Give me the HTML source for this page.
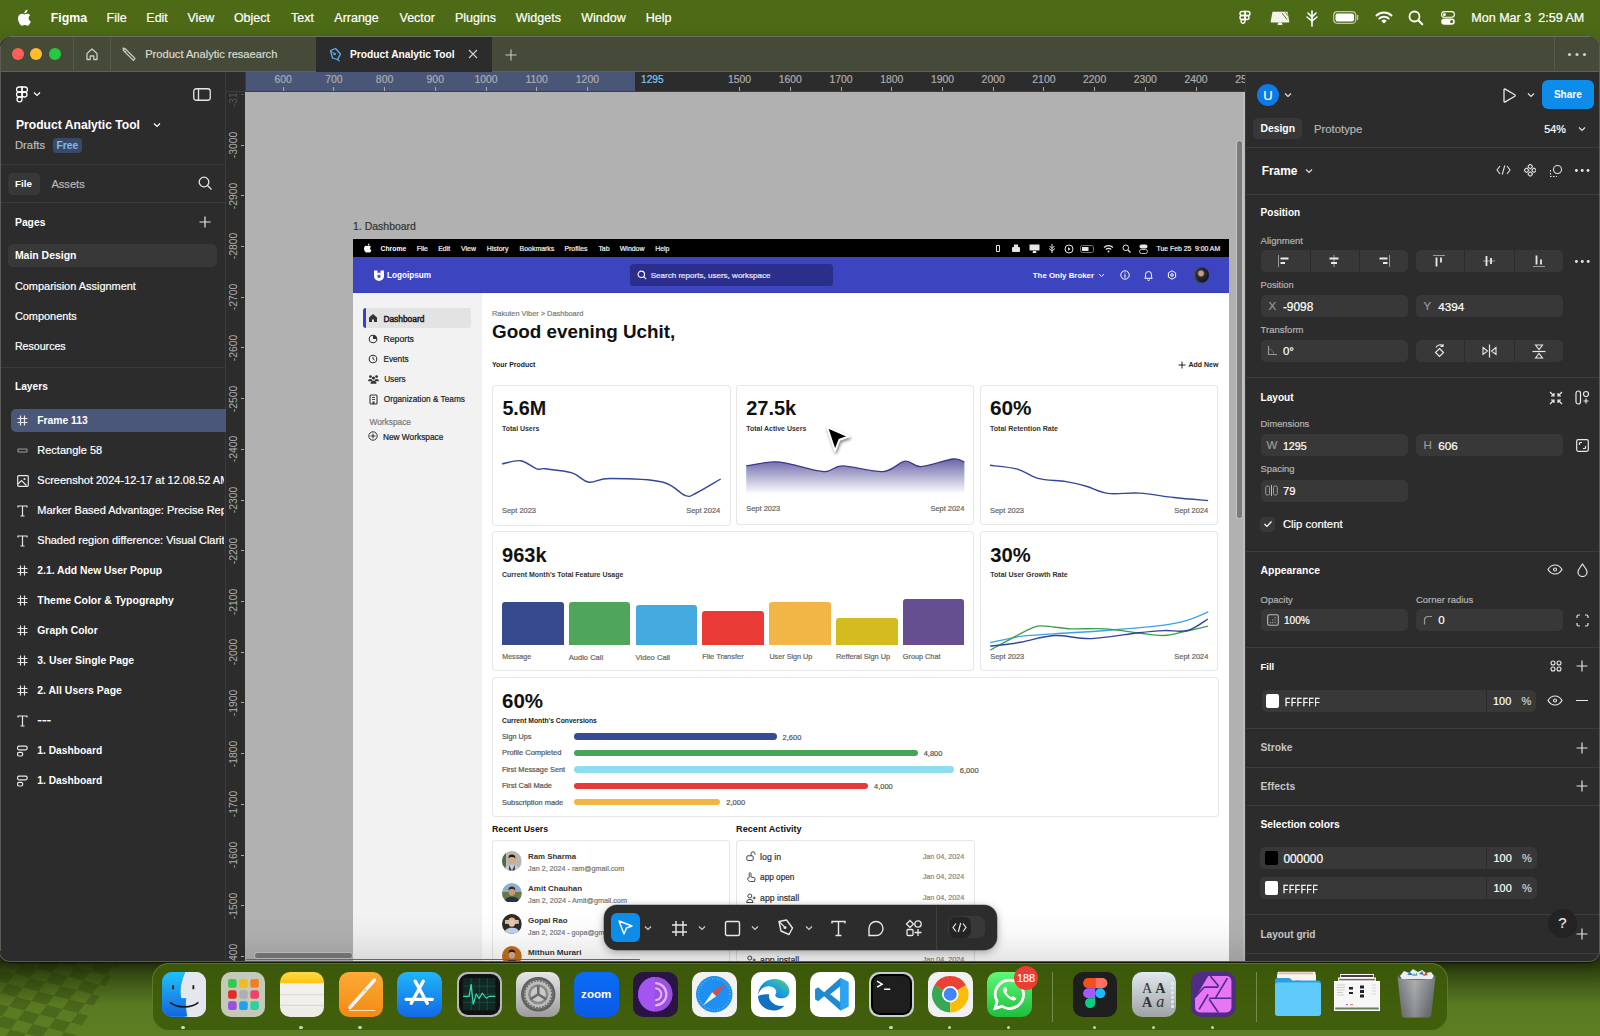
<!DOCTYPE html>
<html><head><meta charset="utf-8"><title>Figma</title>
<style>
html,body{margin:0;padding:0;}
body{width:1600px;height:1036px;overflow:hidden;position:relative;background:#4d6a17;font-family:"Liberation Sans",sans-serif;-webkit-font-smoothing:antialiased;}
</style></head><body>
<div style="position:absolute;left:0px;top:0px;width:1600px;height:37px;background:#4d6a17;"></div>
<svg style="position:absolute;left:18px;top:9px;" width="14" height="17" viewBox="0 0 14 17" fill="none"><path d="M10.6 9.1c0-1.9 1.6-2.8 1.6-2.9-0.9-1.3-2.3-1.5-2.8-1.5-1.2-0.1-2.3 0.7-2.9 0.7-0.6 0-1.5-0.7-2.5-0.7C2.7 4.7 1.4 5.5 0.7 6.8c-1.4 2.4-0.4 6 1 7.9 0.7 1 1.4 2 2.5 2 1 0 1.4-0.6 2.6-0.6 1.2 0 1.5 0.6 2.5 0.6 1.1 0 1.8-1 2.4-2 0.8-1.1 1.1-2.2 1.1-2.2s-2.2-0.8-2.2-3.4zM8.6 3.2c0.5-0.7 0.9-1.6 0.8-2.5-0.8 0-1.7 0.5-2.3 1.2-0.5 0.6-0.9 1.5-0.8 2.4 0.9 0.1 1.7-0.4 2.3-1.1z" fill="#fff"/></svg>
<div style="position:absolute;white-space:pre;color:#fff;font-weight:700;left:50.7px;top:10.88px;font-size:12.36px;line-height:14.83px;">Figma</div>
<div style="position:absolute;white-space:pre;color:#fff;font-weight:400;-webkit-text-stroke:0.2px currentColor;left:106.6px;top:10.80px;font-size:12.50px;line-height:15.0px;">File</div>
<div style="position:absolute;white-space:pre;color:#fff;font-weight:400;-webkit-text-stroke:0.2px currentColor;left:146.3px;top:10.80px;font-size:12.50px;line-height:15.0px;">Edit</div>
<div style="position:absolute;white-space:pre;color:#fff;font-weight:400;-webkit-text-stroke:0.2px currentColor;left:187.5px;top:10.80px;font-size:12.50px;line-height:15.0px;">View</div>
<div style="position:absolute;white-space:pre;color:#fff;font-weight:400;-webkit-text-stroke:0.2px currentColor;left:233.9px;top:10.80px;font-size:12.50px;line-height:15.0px;">Object</div>
<div style="position:absolute;white-space:pre;color:#fff;font-weight:400;-webkit-text-stroke:0.2px currentColor;left:291px;top:10.80px;font-size:12.50px;line-height:15.0px;">Text</div>
<div style="position:absolute;white-space:pre;color:#fff;font-weight:400;-webkit-text-stroke:0.2px currentColor;left:334.3px;top:10.80px;font-size:12.50px;line-height:15.0px;">Arrange</div>
<div style="position:absolute;white-space:pre;color:#fff;font-weight:400;-webkit-text-stroke:0.2px currentColor;left:399.5px;top:10.80px;font-size:12.50px;line-height:15.0px;">Vector</div>
<div style="position:absolute;white-space:pre;color:#fff;font-weight:400;-webkit-text-stroke:0.2px currentColor;left:455px;top:10.80px;font-size:12.50px;line-height:15.0px;">Plugins</div>
<div style="position:absolute;white-space:pre;color:#fff;font-weight:400;-webkit-text-stroke:0.2px currentColor;left:515.75px;top:10.80px;font-size:12.50px;line-height:15.0px;">Widgets</div>
<div style="position:absolute;white-space:pre;color:#fff;font-weight:400;-webkit-text-stroke:0.2px currentColor;left:581.25px;top:10.80px;font-size:12.50px;line-height:15.0px;">Window</div>
<div style="position:absolute;white-space:pre;color:#fff;font-weight:400;-webkit-text-stroke:0.2px currentColor;left:645.75px;top:10.80px;font-size:12.50px;line-height:15.0px;">Help</div>
<svg style="position:absolute;left:1238px;top:10px;" width="14" height="15" viewBox="0 0 14 15" fill="none"><g stroke="#fff" stroke-width="1.4" fill="none"><path d="M4 1.5h3v4H4a2 2 0 010-4z"/><path d="M7 1.5h3a2 2 0 010 4H7z"/><path d="M4 5.5h3v4H4a2 2 0 010-4z"/><circle cx="9" cy="7.5" r="2"/><path d="M4 9.5h3v2a2 2 0 11-3-2z"/></g></svg>
<svg style="position:absolute;left:1269.5px;top:10.5px;" width="20" height="15" viewBox="0 0 20 15" fill="none"><path d="M2.5 0.8h15l1.8 9.7a0.8 0.8 0 01-0.8 0.9H1.5a0.8 0.8 0 01-0.8-0.9z" fill="#f2f2ea"/><path d="M8.3 11.4h3.4l0.8 2.6H7.5z" fill="#f2f2ea"/><path d="M12 2l5 6.5M15.5 1.5l2 3" stroke="#4d6a17" stroke-width="0.9"/></svg>
<svg style="position:absolute;left:1305px;top:8px;" width="14" height="20" viewBox="0 0 14 20" fill="none"><g stroke="#fff" stroke-width="1.6" fill="none" stroke-linecap="round"><path d="M7 3v15"/><path d="M3 5l4 4 4-4"/><path d="M2 9l5 4 5-4"/></g></svg>
<svg style="position:absolute;left:1333px;top:11px;" width="26" height="13" viewBox="0 0 26 13" fill="none"><rect x="0.7" y="0.7" width="22" height="11.6" rx="3.5" stroke="#bfc7a8" stroke-width="1.2"/><rect x="2.5" y="2.5" width="18.5" height="8" rx="2" fill="#fff"/><path d="M24.5 4.5v4" stroke="#bfc7a8" stroke-width="1.5" stroke-linecap="round"/></svg>
<svg style="position:absolute;left:1375px;top:10px;" width="18" height="15" viewBox="0 0 18 15" fill="none"><g fill="none" stroke="#fff" stroke-width="2" stroke-linecap="round"><path d="M1.5 5.5a11 11 0 0115 0"/><path d="M4.3 8.5a7 7 0 019.4 0"/></g><path d="M9 13.5l-2.6-2.6a3.6 3.6 0 015.2 0z" fill="#fff"/></svg>
<svg style="position:absolute;left:1408px;top:10px;" width="16" height="16" viewBox="0 0 16 16" fill="none"><circle cx="6.5" cy="6.5" r="5" stroke="#fff" stroke-width="1.8"/><path d="M10.3 10.3l4 4" stroke="#fff" stroke-width="2" stroke-linecap="round"/></svg>
<svg style="position:absolute;left:1441px;top:11.2px;" width="14" height="14" viewBox="0 0 14 14" fill="none"><rect x="0.6" y="0.6" width="12.8" height="5.6" rx="2.8" stroke="#fff" stroke-width="1.1"/><circle cx="3.4" cy="3.4" r="1.5" fill="#fff"/><rect x="0.2" y="7.4" width="13.6" height="6.4" rx="3.2" fill="#fff"/><circle cx="10.6" cy="10.6" r="1.6" fill="#4d6a17"/></svg>
<div style="position:absolute;white-space:pre;color:#fff;font-weight:400;-webkit-text-stroke:0.2px currentColor;left:1471.25px;top:10.77px;font-size:12.55px;line-height:15.06px;">Mon Mar 3  2:59 AM</div>
<div style="position:absolute;left:0px;top:930px;width:1600px;height:106px;background:linear-gradient(180deg,#26350b 0px,#26350b 30px,#3a5214 48px,#5a7a22 75px,#5e7e24 106px);"></div>
<svg style="position:absolute;left:0px;top:961px;" width="130" height="75" viewBox="0 0 130 75" fill="none"><defs><clipPath id="cck"><path d="M0,0 L120,0 L76,75 L0,75z"/></clipPath></defs><g clip-path="url(#cck)" fill="#1c2a06" opacity="0.24"><path d="M-26.5,-31.5 l15.5,4.0 l-7.0,9.5 l-15.5,-4.0z"/><path d="M-40.5,-12.5 l15.5,4.0 l-7.0,9.5 l-15.5,-4.0z"/><path d="M-54.5,6.5 l15.5,4.0 l-7.0,9.5 l-15.5,-4.0z"/><path d="M-68.5,25.5 l15.5,4.0 l-7.0,9.5 l-15.5,-4.0z"/><path d="M-82.5,44.5 l15.5,4.0 l-7.0,9.5 l-15.5,-4.0z"/><path d="M-96.5,63.5 l15.5,4.0 l-7.0,9.5 l-15.5,-4.0z"/><path d="M-4.0,-37.0 l15.5,4.0 l-7.0,9.5 l-15.5,-4.0z"/><path d="M-18.0,-18.0 l15.5,4.0 l-7.0,9.5 l-15.5,-4.0z"/><path d="M-32.0,1.0 l15.5,4.0 l-7.0,9.5 l-15.5,-4.0z"/><path d="M-46.0,20.0 l15.5,4.0 l-7.0,9.5 l-15.5,-4.0z"/><path d="M-60.0,39.0 l15.5,4.0 l-7.0,9.5 l-15.5,-4.0z"/><path d="M-74.0,58.0 l15.5,4.0 l-7.0,9.5 l-15.5,-4.0z"/><path d="M-88.0,77.0 l15.5,4.0 l-7.0,9.5 l-15.5,-4.0z"/><path d="M4.5,-23.5 l15.5,4.0 l-7.0,9.5 l-15.5,-4.0z"/><path d="M-9.5,-4.5 l15.5,4.0 l-7.0,9.5 l-15.5,-4.0z"/><path d="M-23.5,14.5 l15.5,4.0 l-7.0,9.5 l-15.5,-4.0z"/><path d="M-37.5,33.5 l15.5,4.0 l-7.0,9.5 l-15.5,-4.0z"/><path d="M-51.5,52.5 l15.5,4.0 l-7.0,9.5 l-15.5,-4.0z"/><path d="M-65.5,71.5 l15.5,4.0 l-7.0,9.5 l-15.5,-4.0z"/><path d="M27.0,-29.0 l15.5,4.0 l-7.0,9.5 l-15.5,-4.0z"/><path d="M13.0,-10.0 l15.5,4.0 l-7.0,9.5 l-15.5,-4.0z"/><path d="M-1.0,9.0 l15.5,4.0 l-7.0,9.5 l-15.5,-4.0z"/><path d="M-15.0,28.0 l15.5,4.0 l-7.0,9.5 l-15.5,-4.0z"/><path d="M-29.0,47.0 l15.5,4.0 l-7.0,9.5 l-15.5,-4.0z"/><path d="M-43.0,66.0 l15.5,4.0 l-7.0,9.5 l-15.5,-4.0z"/><path d="M-57.0,85.0 l15.5,4.0 l-7.0,9.5 l-15.5,-4.0z"/><path d="M35.5,-15.5 l15.5,4.0 l-7.0,9.5 l-15.5,-4.0z"/><path d="M21.5,3.5 l15.5,4.0 l-7.0,9.5 l-15.5,-4.0z"/><path d="M7.5,22.5 l15.5,4.0 l-7.0,9.5 l-15.5,-4.0z"/><path d="M-6.5,41.5 l15.5,4.0 l-7.0,9.5 l-15.5,-4.0z"/><path d="M-20.5,60.5 l15.5,4.0 l-7.0,9.5 l-15.5,-4.0z"/><path d="M-34.5,79.5 l15.5,4.0 l-7.0,9.5 l-15.5,-4.0z"/><path d="M58.0,-21.0 l15.5,4.0 l-7.0,9.5 l-15.5,-4.0z"/><path d="M44.0,-2.0 l15.5,4.0 l-7.0,9.5 l-15.5,-4.0z"/><path d="M30.0,17.0 l15.5,4.0 l-7.0,9.5 l-15.5,-4.0z"/><path d="M16.0,36.0 l15.5,4.0 l-7.0,9.5 l-15.5,-4.0z"/><path d="M2.0,55.0 l15.5,4.0 l-7.0,9.5 l-15.5,-4.0z"/><path d="M-12.0,74.0 l15.5,4.0 l-7.0,9.5 l-15.5,-4.0z"/><path d="M-26.0,93.0 l15.5,4.0 l-7.0,9.5 l-15.5,-4.0z"/><path d="M66.5,-7.5 l15.5,4.0 l-7.0,9.5 l-15.5,-4.0z"/><path d="M52.5,11.5 l15.5,4.0 l-7.0,9.5 l-15.5,-4.0z"/><path d="M38.5,30.5 l15.5,4.0 l-7.0,9.5 l-15.5,-4.0z"/><path d="M24.5,49.5 l15.5,4.0 l-7.0,9.5 l-15.5,-4.0z"/><path d="M10.5,68.5 l15.5,4.0 l-7.0,9.5 l-15.5,-4.0z"/><path d="M-3.5,87.5 l15.5,4.0 l-7.0,9.5 l-15.5,-4.0z"/><path d="M89.0,-13.0 l15.5,4.0 l-7.0,9.5 l-15.5,-4.0z"/><path d="M75.0,6.0 l15.5,4.0 l-7.0,9.5 l-15.5,-4.0z"/><path d="M61.0,25.0 l15.5,4.0 l-7.0,9.5 l-15.5,-4.0z"/><path d="M47.0,44.0 l15.5,4.0 l-7.0,9.5 l-15.5,-4.0z"/><path d="M33.0,63.0 l15.5,4.0 l-7.0,9.5 l-15.5,-4.0z"/><path d="M19.0,82.0 l15.5,4.0 l-7.0,9.5 l-15.5,-4.0z"/><path d="M5.0,101.0 l15.5,4.0 l-7.0,9.5 l-15.5,-4.0z"/><path d="M97.5,0.5 l15.5,4.0 l-7.0,9.5 l-15.5,-4.0z"/><path d="M83.5,19.5 l15.5,4.0 l-7.0,9.5 l-15.5,-4.0z"/><path d="M69.5,38.5 l15.5,4.0 l-7.0,9.5 l-15.5,-4.0z"/><path d="M55.5,57.5 l15.5,4.0 l-7.0,9.5 l-15.5,-4.0z"/><path d="M41.5,76.5 l15.5,4.0 l-7.0,9.5 l-15.5,-4.0z"/><path d="M27.5,95.5 l15.5,4.0 l-7.0,9.5 l-15.5,-4.0z"/><path d="M120.0,-5.0 l15.5,4.0 l-7.0,9.5 l-15.5,-4.0z"/><path d="M106.0,14.0 l15.5,4.0 l-7.0,9.5 l-15.5,-4.0z"/><path d="M92.0,33.0 l15.5,4.0 l-7.0,9.5 l-15.5,-4.0z"/><path d="M78.0,52.0 l15.5,4.0 l-7.0,9.5 l-15.5,-4.0z"/><path d="M64.0,71.0 l15.5,4.0 l-7.0,9.5 l-15.5,-4.0z"/><path d="M50.0,90.0 l15.5,4.0 l-7.0,9.5 l-15.5,-4.0z"/><path d="M36.0,109.0 l15.5,4.0 l-7.0,9.5 l-15.5,-4.0z"/><path d="M128.5,8.5 l15.5,4.0 l-7.0,9.5 l-15.5,-4.0z"/><path d="M114.5,27.5 l15.5,4.0 l-7.0,9.5 l-15.5,-4.0z"/><path d="M100.5,46.5 l15.5,4.0 l-7.0,9.5 l-15.5,-4.0z"/><path d="M86.5,65.5 l15.5,4.0 l-7.0,9.5 l-15.5,-4.0z"/><path d="M72.5,84.5 l15.5,4.0 l-7.0,9.5 l-15.5,-4.0z"/><path d="M58.5,103.5 l15.5,4.0 l-7.0,9.5 l-15.5,-4.0z"/><path d="M151.0,3.0 l15.5,4.0 l-7.0,9.5 l-15.5,-4.0z"/><path d="M137.0,22.0 l15.5,4.0 l-7.0,9.5 l-15.5,-4.0z"/><path d="M123.0,41.0 l15.5,4.0 l-7.0,9.5 l-15.5,-4.0z"/><path d="M109.0,60.0 l15.5,4.0 l-7.0,9.5 l-15.5,-4.0z"/><path d="M95.0,79.0 l15.5,4.0 l-7.0,9.5 l-15.5,-4.0z"/><path d="M81.0,98.0 l15.5,4.0 l-7.0,9.5 l-15.5,-4.0z"/><path d="M67.0,117.0 l15.5,4.0 l-7.0,9.5 l-15.5,-4.0z"/><path d="M159.5,16.5 l15.5,4.0 l-7.0,9.5 l-15.5,-4.0z"/><path d="M145.5,35.5 l15.5,4.0 l-7.0,9.5 l-15.5,-4.0z"/><path d="M131.5,54.5 l15.5,4.0 l-7.0,9.5 l-15.5,-4.0z"/><path d="M117.5,73.5 l15.5,4.0 l-7.0,9.5 l-15.5,-4.0z"/><path d="M103.5,92.5 l15.5,4.0 l-7.0,9.5 l-15.5,-4.0z"/><path d="M89.5,111.5 l15.5,4.0 l-7.0,9.5 l-15.5,-4.0z"/><path d="M182.0,11.0 l15.5,4.0 l-7.0,9.5 l-15.5,-4.0z"/><path d="M168.0,30.0 l15.5,4.0 l-7.0,9.5 l-15.5,-4.0z"/><path d="M154.0,49.0 l15.5,4.0 l-7.0,9.5 l-15.5,-4.0z"/><path d="M140.0,68.0 l15.5,4.0 l-7.0,9.5 l-15.5,-4.0z"/><path d="M126.0,87.0 l15.5,4.0 l-7.0,9.5 l-15.5,-4.0z"/><path d="M112.0,106.0 l15.5,4.0 l-7.0,9.5 l-15.5,-4.0z"/><path d="M98.0,125.0 l15.5,4.0 l-7.0,9.5 l-15.5,-4.0z"/><path d="M190.5,24.5 l15.5,4.0 l-7.0,9.5 l-15.5,-4.0z"/><path d="M176.5,43.5 l15.5,4.0 l-7.0,9.5 l-15.5,-4.0z"/><path d="M162.5,62.5 l15.5,4.0 l-7.0,9.5 l-15.5,-4.0z"/><path d="M148.5,81.5 l15.5,4.0 l-7.0,9.5 l-15.5,-4.0z"/><path d="M134.5,100.5 l15.5,4.0 l-7.0,9.5 l-15.5,-4.0z"/><path d="M120.5,119.5 l15.5,4.0 l-7.0,9.5 l-15.5,-4.0z"/><path d="M213.0,19.0 l15.5,4.0 l-7.0,9.5 l-15.5,-4.0z"/><path d="M199.0,38.0 l15.5,4.0 l-7.0,9.5 l-15.5,-4.0z"/><path d="M185.0,57.0 l15.5,4.0 l-7.0,9.5 l-15.5,-4.0z"/><path d="M171.0,76.0 l15.5,4.0 l-7.0,9.5 l-15.5,-4.0z"/><path d="M157.0,95.0 l15.5,4.0 l-7.0,9.5 l-15.5,-4.0z"/><path d="M143.0,114.0 l15.5,4.0 l-7.0,9.5 l-15.5,-4.0z"/><path d="M129.0,133.0 l15.5,4.0 l-7.0,9.5 l-15.5,-4.0z"/></g></svg>
<div style="position:absolute;left:0px;top:36.5px;width:1599.3px;height:924px;background:#2c2c2c;border-radius:10px;box-shadow:0 0 0 1px #5b5c58, 0 1.5px 1px rgba(0,0,0,0.55), 0 4px 14px rgba(0,0,0,0.35);overflow:hidden"></div>
<div style="position:absolute;left:0.5px;top:37px;width:1598.5px;height:35px;background:#464b39;border-radius:10px 10px 0 0"></div>
<div style="position:absolute;left:0.5px;top:71px;width:1598.5px;height:1px;background:#5f6452;"></div>
<div style="position:absolute;left:10px;top:36px;width:1580px;height:1px;background:#6c715f;"></div>
<div style="position:absolute;left:11.8px;top:48.4px;width:12px;height:12px;background:#fe5f57;border-radius:50%"></div>
<div style="position:absolute;left:30.4px;top:48.4px;width:12px;height:12px;background:#febc2e;border-radius:50%"></div>
<div style="position:absolute;left:49.2px;top:48.4px;width:12px;height:12px;background:#28c840;border-radius:50%"></div>
<div style="position:absolute;left:73px;top:37px;width:1px;height:35px;background:#565a49;"></div>
<div style="position:absolute;left:110px;top:37px;width:1px;height:35px;background:#565a49;"></div>
<div style="position:absolute;left:1554px;top:37px;width:1px;height:35px;background:#565a49;"></div>
<svg style="position:absolute;left:85px;top:47px;" width="14" height="14" viewBox="0 0 14 14" fill="none"><path d="M2 6.5L7 2l5 4.5V12.5H8.8V9H5.2v3.5H2z" stroke="#c8cbbd" stroke-width="1.3" stroke-linejoin="round"/></svg>
<svg style="position:absolute;left:122px;top:47px;" width="15" height="15" viewBox="0 0 15 15" fill="none"><path d="M3 1.5l10 10-1.5 2L1.5 3.5z M1.5 3.5L1 1l2 0.5" stroke="#c8cbbd" stroke-width="1.2" stroke-linejoin="round"/><path d="M4.5 3.5l-1.5 1.5" stroke="#c8cbbd" stroke-width="1"/></svg>
<div style="position:absolute;white-space:pre;color:#d9dbd0;font-weight:400;-webkit-text-stroke:0.2px currentColor;left:145.2px;top:48.33px;font-size:11.12px;line-height:13.35px;">Product Analytic resaearch</div>
<div style="position:absolute;left:316px;top:37px;width:176px;height:35px;background:#2c2c2c;"></div>
<svg style="position:absolute;left:328px;top:47px;" width="15" height="15" viewBox="0 0 15 15" fill="none"><path d="M2.5 3.5l5-2 5 5.5-3 5.5-5-1.5z" stroke="#5cb0ee" stroke-width="1.3" stroke-linejoin="round"/><circle cx="6.7" cy="7" r="1.2" fill="#5cb0ee"/><path d="M2.5 3.5l4.2 3.5" stroke="#5cb0ee" stroke-width="1"/><path d="M9.5 12.5l2 1.5" stroke="#5cb0ee" stroke-width="1.3"/></svg>
<div style="position:absolute;white-space:pre;color:#ffffff;font-weight:700;left:350px;top:48.85px;font-size:10.24px;line-height:12.29px;">Product Analytic Tool</div>
<svg style="position:absolute;left:468px;top:49px;" width="10" height="10" viewBox="0 0 10 10" fill="none"><path d="M1 1l8 8M9 1L1 9" stroke="#d0d0d0" stroke-width="1.1"/></svg>
<svg style="position:absolute;left:505px;top:48.5px;" width="12" height="12" viewBox="0 0 12 12" fill="none"><path d="M6 0.5v11M0.5 6h11" stroke="#c8cbbd" stroke-width="1.1"/></svg>
<svg style="position:absolute;left:1567px;top:52px;" width="20" height="5" viewBox="0 0 20 5" fill="none"><circle cx="2.5" cy="2.5" r="1.6" fill="#d0d0d0"/><circle cx="10" cy="2.5" r="1.6" fill="#d0d0d0"/><circle cx="17.5" cy="2.5" r="1.6" fill="#d0d0d0"/></svg>
<div style="position:absolute;left:0px;top:72px;width:224.5px;height:888.5px;background:#2c2c2c;border-radius:0 0 0 10px"></div>
<div style="position:absolute;left:224.5px;top:72px;width:1px;height:888.5px;background:#3b3b3b;"></div>
<svg style="position:absolute;left:16px;top:86px;" width="12" height="17" viewBox="0 0 12 17" fill="none"><g stroke="#fff" stroke-width="1.3" fill="none"><path d="M3 1h3v5H3a2.5 2.5 0 010-5z"/><path d="M6 1h3a2.5 2.5 0 010 5H6z"/><path d="M3 6h3v5H3a2.5 2.5 0 010-5z"/><circle cx="8.5" cy="8.5" r="2.5"/><path d="M3 11h3v2.5A2.5 2.5 0 113 11z"/></g></svg>
<svg style="position:absolute;left:33px;top:91px;" width="8" height="6" viewBox="0 0 8 6" fill="none"><path d="M1 1.5l3 3 3-3" stroke="#fff" stroke-width="1.2"/></svg>
<svg style="position:absolute;left:193px;top:88px;" width="18" height="13" viewBox="0 0 18 13" fill="none"><rect x="0.75" y="0.75" width="16.5" height="11.5" rx="2.5" stroke="#e6e6e6" stroke-width="1.3"/><path d="M5.5 1v11" stroke="#e6e6e6" stroke-width="1.3"/></svg>
<div style="position:absolute;white-space:pre;color:#fff;font-weight:700;left:16px;top:118.22px;font-size:12.13px;line-height:14.56px;">Product Analytic Tool</div>
<svg style="position:absolute;left:153px;top:121.5px;" width="8" height="6" viewBox="0 0 8 6" fill="none"><path d="M1 1.5l3 3 3-3" stroke="#fff" stroke-width="1.2"/></svg>
<div style="position:absolute;white-space:pre;color:#bdbdbd;font-weight:400;-webkit-text-stroke:0.2px currentColor;left:15px;top:139.25px;font-size:11.25px;line-height:13.5px;">Drafts</div>
<div style="position:absolute;left:52.5px;top:138px;width:29.5px;height:14.5px;background:#394a68;border-radius:4px"></div>
<div style="position:absolute;white-space:pre;color:#7cbaf2;font-weight:700;left:56.5px;top:139.81px;font-size:10.32px;line-height:12.38px;">Free</div>
<div style="position:absolute;left:0.5px;top:164px;width:224px;height:1px;background:#3b3b3b;"></div>
<div style="position:absolute;left:7.5px;top:172.5px;width:32.5px;height:22px;background:#383838;border-radius:5px"></div>
<div style="position:absolute;white-space:pre;color:#fff;font-weight:700;left:15px;top:178.38px;font-size:9.87px;line-height:11.84px;">File</div>
<div style="position:absolute;white-space:pre;color:#b8b8b8;font-weight:400;-webkit-text-stroke:0.2px currentColor;left:51.4px;top:177.62px;font-size:11.13px;line-height:13.36px;">Assets</div>
<svg style="position:absolute;left:198px;top:176px;" width="15" height="15" viewBox="0 0 15 15" fill="none"><circle cx="6" cy="6" r="4.8" stroke="#e6e6e6" stroke-width="1.3"/><path d="M9.5 9.5l4 4" stroke="#e6e6e6" stroke-width="1.3"/></svg>
<div style="position:absolute;left:0.5px;top:202px;width:224px;height:1px;background:#3b3b3b;"></div>
<div style="position:absolute;white-space:pre;color:#fff;font-weight:700;left:15px;top:216.61px;font-size:10.32px;line-height:12.38px;">Pages</div>
<svg style="position:absolute;left:199px;top:216px;" width="12" height="12" viewBox="0 0 12 12" fill="none"><path d="M6 0.5v11M0.5 6h11" stroke="#e6e6e6" stroke-width="1.2"/></svg>
<div style="position:absolute;left:7.6px;top:244px;width:209.4px;height:22.5px;background:#383838;border-radius:5px"></div>
<div style="position:absolute;white-space:pre;color:#fff;font-weight:700;left:14.9px;top:250.22px;font-size:10.46px;line-height:12.55px;">Main Design</div>
<div style="position:absolute;white-space:pre;color:#fff;font-weight:400;-webkit-text-stroke:0.2px currentColor;left:14.9px;top:279.64px;font-size:10.94px;line-height:13.13px;">Comparision Assignment</div>
<div style="position:absolute;white-space:pre;color:#fff;font-weight:400;-webkit-text-stroke:0.2px currentColor;left:14.9px;top:309.94px;font-size:10.93px;line-height:13.12px;">Components</div>
<div style="position:absolute;white-space:pre;color:#fff;font-weight:400;-webkit-text-stroke:0.2px currentColor;left:14.9px;top:339.82px;font-size:10.63px;line-height:12.75px;">Resources</div>
<div style="position:absolute;left:0.5px;top:367px;width:224px;height:1px;background:#3b3b3b;"></div>
<div style="position:absolute;white-space:pre;color:#fff;font-weight:700;left:14.9px;top:381.46px;font-size:10.23px;line-height:12.28px;">Layers</div>
<div style="position:absolute;left:11.4px;top:409px;width:220px;height:22.5px;background:#4b5778;border-radius:5px 0 0 5px"></div>
<div style="position:absolute;left:0;top:400px;width:224px;height:400px;overflow:hidden">
<svg style="position:absolute;left:17px;top:14.5px;" width="11" height="11" viewBox="0 0 11 11" fill="none"><path d="M3.5 0.5v10M7.5 0.5v10M0.5 3.5h10M0.5 7.5h10" stroke="#e8e8e8" stroke-width="1.2"/></svg>
<div style="position:absolute;white-space:pre;color:#fff;font-weight:700;left:37.3px;top:14.61px;font-size:10.32px;line-height:12.39px;">Frame 113</div>
<svg style="position:absolute;left:17px;top:44.5px;" width="11" height="11" viewBox="0 0 11 11" fill="none"><rect x="1" y="4" width="9" height="3" rx="0.5" stroke="#9a9a9a" stroke-width="1.1"/></svg>
<div style="position:absolute;white-space:pre;color:#fff;font-weight:400;-webkit-text-stroke:0.2px currentColor;left:37.3px;top:44.19px;font-size:11.01px;line-height:13.22px;">Rectangle 58</div>
<svg style="position:absolute;left:17px;top:74.5px;" width="12" height="12" viewBox="0 0 12 12" fill="none"><rect x="0.7" y="0.7" width="10.6" height="10.6" rx="1" stroke="#e8e8e8" stroke-width="1.2"/><circle cx="7.5" cy="4" r="1.1" fill="#e8e8e8"/><path d="M1 9l3.5-3.5 5 5" stroke="#e8e8e8" stroke-width="1.2"/></svg>
<div style="position:absolute;white-space:pre;color:#fff;font-weight:400;-webkit-text-stroke:0.2px currentColor;left:37.3px;top:74.20px;font-size:11.00px;line-height:13.2px;">Screenshot 2024-12-17 at 12.08.52 AM</div>
<svg style="position:absolute;left:17px;top:104.5px;" width="11" height="12" viewBox="0 0 11 12" fill="none"><path d="M1 2.5V1h9v1.5M5.5 1v10M3.5 11h4" stroke="#e8e8e8" stroke-width="1.2"/></svg>
<div style="position:absolute;white-space:pre;color:#fff;font-weight:400;-webkit-text-stroke:0.2px currentColor;left:37.3px;top:104.20px;font-size:11.00px;line-height:13.2px;">Marker Based Advantage: Precise Rep</div>
<svg style="position:absolute;left:17px;top:134.5px;" width="11" height="12" viewBox="0 0 11 12" fill="none"><path d="M1 2.5V1h9v1.5M5.5 1v10M3.5 11h4" stroke="#e8e8e8" stroke-width="1.2"/></svg>
<div style="position:absolute;white-space:pre;color:#fff;font-weight:400;-webkit-text-stroke:0.2px currentColor;left:37.3px;top:134.20px;font-size:11.00px;line-height:13.2px;">Shaded region difference: Visual Clarit</div>
<svg style="position:absolute;left:17px;top:164.5px;" width="11" height="11" viewBox="0 0 11 11" fill="none"><path d="M3.5 0.5v10M7.5 0.5v10M0.5 3.5h10M0.5 7.5h10" stroke="#e8e8e8" stroke-width="1.2"/></svg>
<div style="position:absolute;white-space:pre;color:#fff;font-weight:700;left:37.3px;top:164.59px;font-size:10.34px;line-height:12.41px;">2.1. Add New User Popup</div>
<svg style="position:absolute;left:17px;top:194.5px;" width="11" height="11" viewBox="0 0 11 11" fill="none"><path d="M3.5 0.5v10M7.5 0.5v10M0.5 3.5h10M0.5 7.5h10" stroke="#e8e8e8" stroke-width="1.2"/></svg>
<div style="position:absolute;white-space:pre;color:#fff;font-weight:700;left:37.3px;top:194.52px;font-size:10.47px;line-height:12.56px;">Theme Color &amp; Typography</div>
<svg style="position:absolute;left:17px;top:224.5px;" width="11" height="11" viewBox="0 0 11 11" fill="none"><path d="M3.5 0.5v10M7.5 0.5v10M0.5 3.5h10M0.5 7.5h10" stroke="#e8e8e8" stroke-width="1.2"/></svg>
<div style="position:absolute;white-space:pre;color:#fff;font-weight:700;left:37.3px;top:224.58px;font-size:10.37px;line-height:12.45px;">Graph Color</div>
<svg style="position:absolute;left:17px;top:254.5px;" width="11" height="11" viewBox="0 0 11 11" fill="none"><path d="M3.5 0.5v10M7.5 0.5v10M0.5 3.5h10M0.5 7.5h10" stroke="#e8e8e8" stroke-width="1.2"/></svg>
<div style="position:absolute;white-space:pre;color:#fff;font-weight:700;left:37.3px;top:254.53px;font-size:10.45px;line-height:12.54px;">3. User Single Page</div>
<svg style="position:absolute;left:17px;top:284.5px;" width="11" height="11" viewBox="0 0 11 11" fill="none"><path d="M3.5 0.5v10M7.5 0.5v10M0.5 3.5h10M0.5 7.5h10" stroke="#e8e8e8" stroke-width="1.2"/></svg>
<div style="position:absolute;white-space:pre;color:#fff;font-weight:700;left:37.3px;top:284.52px;font-size:10.47px;line-height:12.57px;">2. All Users Page</div>
<svg style="position:absolute;left:17px;top:314.5px;" width="11" height="12" viewBox="0 0 11 12" fill="none"><path d="M1 2.5V1h9v1.5M5.5 1v10M3.5 11h4" stroke="#e8e8e8" stroke-width="1.2"/></svg>
<div style="position:absolute;white-space:pre;color:#fff;font-weight:400;-webkit-text-stroke:0.2px currentColor;left:37.3px;top:312.39px;font-size:14.01px;line-height:16.82px;">---</div>
<svg style="position:absolute;left:17px;top:344.5px;" width="12" height="12" viewBox="0 0 12 12" fill="none"><rect x="0.6" y="1.2" width="9.5" height="3.6" rx="1.2" stroke="#e8e8e8" stroke-width="1.2"/><rect x="0.6" y="7.4" width="5" height="3.6" rx="1.2" stroke="#e8e8e8" stroke-width="1.2"/></svg>
<div style="position:absolute;white-space:pre;color:#fff;font-weight:700;left:37.3px;top:344.65px;font-size:10.24px;line-height:12.29px;">1. Dashboard</div>
<svg style="position:absolute;left:17px;top:374.5px;" width="12" height="12" viewBox="0 0 12 12" fill="none"><rect x="0.6" y="1.2" width="9.5" height="3.6" rx="1.2" stroke="#e8e8e8" stroke-width="1.2"/><rect x="0.6" y="7.4" width="5" height="3.6" rx="1.2" stroke="#e8e8e8" stroke-width="1.2"/></svg>
<div style="position:absolute;white-space:pre;color:#fff;font-weight:700;left:37.3px;top:374.65px;font-size:10.24px;line-height:12.29px;">1. Dashboard</div>
</div>
<div style="position:absolute;left:225.5px;top:72px;width:1019.5px;height:19.5px;background:#2c2c2c;"></div>
<div style="position:absolute;left:245px;top:72px;width:390px;height:19.5px;background:#4a5677;"></div>
<div style="position:absolute;left:225.5px;top:91px;width:1019.5px;height:1px;background:#3e3e3e;"></div>
<div style="position:absolute;left:244.5px;top:72px;width:1px;height:20px;background:#3e3e3e;"></div>
<div style="position:absolute;left:282.6px;top:87px;width:1px;height:3.5px;background:#a9a9a9;"></div>
<div style="position:absolute;white-space:pre;color:#acacac;font-weight:400;-webkit-text-stroke:0.2px currentColor;left:283.1px;transform:translateX(-50%);top:73.56px;font-size:10.40px;line-height:12.48px;">600</div>
<div style="position:absolute;left:333.3px;top:87px;width:1px;height:3.5px;background:#a9a9a9;"></div>
<div style="position:absolute;white-space:pre;color:#acacac;font-weight:400;-webkit-text-stroke:0.2px currentColor;left:333.82000000000005px;transform:translateX(-50%);top:73.56px;font-size:10.40px;line-height:12.48px;">700</div>
<div style="position:absolute;left:384.0px;top:87px;width:1px;height:3.5px;background:#a9a9a9;"></div>
<div style="position:absolute;white-space:pre;color:#acacac;font-weight:400;-webkit-text-stroke:0.2px currentColor;left:384.54px;transform:translateX(-50%);top:73.56px;font-size:10.40px;line-height:12.48px;">800</div>
<div style="position:absolute;left:434.8px;top:87px;width:1px;height:3.5px;background:#a9a9a9;"></div>
<div style="position:absolute;white-space:pre;color:#acacac;font-weight:400;-webkit-text-stroke:0.2px currentColor;left:435.26px;transform:translateX(-50%);top:73.56px;font-size:10.40px;line-height:12.48px;">900</div>
<div style="position:absolute;left:485.5px;top:87px;width:1px;height:3.5px;background:#a9a9a9;"></div>
<div style="position:absolute;white-space:pre;color:#acacac;font-weight:400;-webkit-text-stroke:0.2px currentColor;left:485.98px;transform:translateX(-50%);top:73.56px;font-size:10.40px;line-height:12.48px;">1000</div>
<div style="position:absolute;left:536.2px;top:87px;width:1px;height:3.5px;background:#a9a9a9;"></div>
<div style="position:absolute;white-space:pre;color:#acacac;font-weight:400;-webkit-text-stroke:0.2px currentColor;left:536.7px;transform:translateX(-50%);top:73.56px;font-size:10.40px;line-height:12.48px;">1100</div>
<div style="position:absolute;left:586.9px;top:87px;width:1px;height:3.5px;background:#a9a9a9;"></div>
<div style="position:absolute;white-space:pre;color:#acacac;font-weight:400;-webkit-text-stroke:0.2px currentColor;left:587.4200000000001px;transform:translateX(-50%);top:73.56px;font-size:10.40px;line-height:12.48px;">1200</div>
<div style="position:absolute;left:739.1px;top:87px;width:1px;height:3.5px;background:#a9a9a9;"></div>
<div style="position:absolute;white-space:pre;color:#acacac;font-weight:400;-webkit-text-stroke:0.2px currentColor;left:739.5799999999999px;transform:translateX(-50%);top:73.56px;font-size:10.40px;line-height:12.48px;">1500</div>
<div style="position:absolute;left:789.8px;top:87px;width:1px;height:3.5px;background:#a9a9a9;"></div>
<div style="position:absolute;white-space:pre;color:#acacac;font-weight:400;-webkit-text-stroke:0.2px currentColor;left:790.3px;transform:translateX(-50%);top:73.56px;font-size:10.40px;line-height:12.48px;">1600</div>
<div style="position:absolute;left:840.5px;top:87px;width:1px;height:3.5px;background:#a9a9a9;"></div>
<div style="position:absolute;white-space:pre;color:#acacac;font-weight:400;-webkit-text-stroke:0.2px currentColor;left:841.02px;transform:translateX(-50%);top:73.56px;font-size:10.40px;line-height:12.48px;">1700</div>
<div style="position:absolute;left:891.2px;top:87px;width:1px;height:3.5px;background:#a9a9a9;"></div>
<div style="position:absolute;white-space:pre;color:#acacac;font-weight:400;-webkit-text-stroke:0.2px currentColor;left:891.74px;transform:translateX(-50%);top:73.56px;font-size:10.40px;line-height:12.48px;">1800</div>
<div style="position:absolute;left:942.0px;top:87px;width:1px;height:3.5px;background:#a9a9a9;"></div>
<div style="position:absolute;white-space:pre;color:#acacac;font-weight:400;-webkit-text-stroke:0.2px currentColor;left:942.46px;transform:translateX(-50%);top:73.56px;font-size:10.40px;line-height:12.48px;">1900</div>
<div style="position:absolute;left:992.7px;top:87px;width:1px;height:3.5px;background:#a9a9a9;"></div>
<div style="position:absolute;white-space:pre;color:#acacac;font-weight:400;-webkit-text-stroke:0.2px currentColor;left:993.18px;transform:translateX(-50%);top:73.56px;font-size:10.40px;line-height:12.48px;">2000</div>
<div style="position:absolute;left:1043.4px;top:87px;width:1px;height:3.5px;background:#a9a9a9;"></div>
<div style="position:absolute;white-space:pre;color:#acacac;font-weight:400;-webkit-text-stroke:0.2px currentColor;left:1043.9px;transform:translateX(-50%);top:73.56px;font-size:10.40px;line-height:12.48px;">2100</div>
<div style="position:absolute;left:1094.1px;top:87px;width:1px;height:3.5px;background:#a9a9a9;"></div>
<div style="position:absolute;white-space:pre;color:#acacac;font-weight:400;-webkit-text-stroke:0.2px currentColor;left:1094.62px;transform:translateX(-50%);top:73.56px;font-size:10.40px;line-height:12.48px;">2200</div>
<div style="position:absolute;left:1144.8px;top:87px;width:1px;height:3.5px;background:#a9a9a9;"></div>
<div style="position:absolute;white-space:pre;color:#acacac;font-weight:400;-webkit-text-stroke:0.2px currentColor;left:1145.3400000000001px;transform:translateX(-50%);top:73.56px;font-size:10.40px;line-height:12.48px;">2300</div>
<div style="position:absolute;left:1195.6px;top:87px;width:1px;height:3.5px;background:#a9a9a9;"></div>
<div style="position:absolute;white-space:pre;color:#acacac;font-weight:400;-webkit-text-stroke:0.2px currentColor;left:1196.06px;transform:translateX(-50%);top:73.56px;font-size:10.40px;line-height:12.48px;">2400</div>
<div style="position:absolute;left:1226px;top:72px;width:19px;height:19px;overflow:hidden;background:#2c2c2c"></div>
<div style="position:absolute;white-space:pre;color:#7cc4f4;font-weight:400;-webkit-text-stroke:0.2px currentColor;left:641px;top:73.68px;font-size:10.20px;line-height:12.24px;">1295</div>
<div style="position:absolute;left:1225px;top:72px;width:20px;height:19px;overflow:hidden">
<div style="position:absolute;white-space:pre;color:#acacac;font-weight:400;-webkit-text-stroke:0.2px currentColor;left:21.8px;transform:translateX(-50%);top:1.56px;font-size:10.40px;line-height:12.48px;">2500</div>
</div>
<div style="position:absolute;left:225.5px;top:92px;width:19.5px;height:868.5px;background:#2c2c2c;"></div>
<div style="position:absolute;left:225px;top:92px;width:20px;height:868.5px;overflow:hidden">
<div style="position:absolute;left:15.5px;top:1.8px;width:3.5px;height:1px;background:#505050;"></div>
<div style="position:absolute;left:8.6px;top:2.3px;width:0;height:0;opacity:0.3"><div style="position:absolute;transform:translate(-50%,-50%) rotate(-90deg);font-size:10.4px;line-height:12px;color:#acacac;white-space:pre">-3100</div></div>
<div style="position:absolute;left:15.5px;top:52.5px;width:3.5px;height:1px;background:#a9a9a9;"></div>
<div style="position:absolute;left:8.6px;top:53.0px;width:0;height:0;opacity:1"><div style="position:absolute;transform:translate(-50%,-50%) rotate(-90deg);font-size:10.4px;line-height:12px;color:#acacac;white-space:pre">-3000</div></div>
<div style="position:absolute;left:15.5px;top:103.2px;width:3.5px;height:1px;background:#a9a9a9;"></div>
<div style="position:absolute;left:8.6px;top:103.7px;width:0;height:0;opacity:1"><div style="position:absolute;transform:translate(-50%,-50%) rotate(-90deg);font-size:10.4px;line-height:12px;color:#acacac;white-space:pre">-2900</div></div>
<div style="position:absolute;left:15.5px;top:153.9px;width:3.5px;height:1px;background:#a9a9a9;"></div>
<div style="position:absolute;left:8.6px;top:154.4px;width:0;height:0;opacity:1"><div style="position:absolute;transform:translate(-50%,-50%) rotate(-90deg);font-size:10.4px;line-height:12px;color:#acacac;white-space:pre">-2800</div></div>
<div style="position:absolute;left:15.5px;top:204.7px;width:3.5px;height:1px;background:#a9a9a9;"></div>
<div style="position:absolute;left:8.6px;top:205.2px;width:0;height:0;opacity:1"><div style="position:absolute;transform:translate(-50%,-50%) rotate(-90deg);font-size:10.4px;line-height:12px;color:#acacac;white-space:pre">-2700</div></div>
<div style="position:absolute;left:15.5px;top:255.4px;width:3.5px;height:1px;background:#a9a9a9;"></div>
<div style="position:absolute;left:8.6px;top:255.9px;width:0;height:0;opacity:1"><div style="position:absolute;transform:translate(-50%,-50%) rotate(-90deg);font-size:10.4px;line-height:12px;color:#acacac;white-space:pre">-2600</div></div>
<div style="position:absolute;left:15.5px;top:306.1px;width:3.5px;height:1px;background:#a9a9a9;"></div>
<div style="position:absolute;left:8.6px;top:306.6px;width:0;height:0;opacity:1"><div style="position:absolute;transform:translate(-50%,-50%) rotate(-90deg);font-size:10.4px;line-height:12px;color:#acacac;white-space:pre">-2500</div></div>
<div style="position:absolute;left:15.5px;top:356.8px;width:3.5px;height:1px;background:#a9a9a9;"></div>
<div style="position:absolute;left:8.6px;top:357.3px;width:0;height:0;opacity:1"><div style="position:absolute;transform:translate(-50%,-50%) rotate(-90deg);font-size:10.4px;line-height:12px;color:#acacac;white-space:pre">-2400</div></div>
<div style="position:absolute;left:15.5px;top:407.5px;width:3.5px;height:1px;background:#a9a9a9;"></div>
<div style="position:absolute;left:8.6px;top:408.0px;width:0;height:0;opacity:1"><div style="position:absolute;transform:translate(-50%,-50%) rotate(-90deg);font-size:10.4px;line-height:12px;color:#acacac;white-space:pre">-2300</div></div>
<div style="position:absolute;left:15.5px;top:458.3px;width:3.5px;height:1px;background:#a9a9a9;"></div>
<div style="position:absolute;left:8.6px;top:458.8px;width:0;height:0;opacity:1"><div style="position:absolute;transform:translate(-50%,-50%) rotate(-90deg);font-size:10.4px;line-height:12px;color:#acacac;white-space:pre">-2200</div></div>
<div style="position:absolute;left:15.5px;top:509.0px;width:3.5px;height:1px;background:#a9a9a9;"></div>
<div style="position:absolute;left:8.6px;top:509.5px;width:0;height:0;opacity:1"><div style="position:absolute;transform:translate(-50%,-50%) rotate(-90deg);font-size:10.4px;line-height:12px;color:#acacac;white-space:pre">-2100</div></div>
<div style="position:absolute;left:15.5px;top:559.7px;width:3.5px;height:1px;background:#a9a9a9;"></div>
<div style="position:absolute;left:8.6px;top:560.2px;width:0;height:0;opacity:1"><div style="position:absolute;transform:translate(-50%,-50%) rotate(-90deg);font-size:10.4px;line-height:12px;color:#acacac;white-space:pre">-2000</div></div>
<div style="position:absolute;left:15.5px;top:610.4px;width:3.5px;height:1px;background:#a9a9a9;"></div>
<div style="position:absolute;left:8.6px;top:610.9px;width:0;height:0;opacity:1"><div style="position:absolute;transform:translate(-50%,-50%) rotate(-90deg);font-size:10.4px;line-height:12px;color:#acacac;white-space:pre">-1900</div></div>
<div style="position:absolute;left:15.5px;top:661.1px;width:3.5px;height:1px;background:#a9a9a9;"></div>
<div style="position:absolute;left:8.6px;top:661.6px;width:0;height:0;opacity:1"><div style="position:absolute;transform:translate(-50%,-50%) rotate(-90deg);font-size:10.4px;line-height:12px;color:#acacac;white-space:pre">-1800</div></div>
<div style="position:absolute;left:15.5px;top:711.9px;width:3.5px;height:1px;background:#a9a9a9;"></div>
<div style="position:absolute;left:8.6px;top:712.4px;width:0;height:0;opacity:1"><div style="position:absolute;transform:translate(-50%,-50%) rotate(-90deg);font-size:10.4px;line-height:12px;color:#acacac;white-space:pre">-1700</div></div>
<div style="position:absolute;left:15.5px;top:762.6px;width:3.5px;height:1px;background:#a9a9a9;"></div>
<div style="position:absolute;left:8.6px;top:763.1px;width:0;height:0;opacity:1"><div style="position:absolute;transform:translate(-50%,-50%) rotate(-90deg);font-size:10.4px;line-height:12px;color:#acacac;white-space:pre">-1600</div></div>
<div style="position:absolute;left:15.5px;top:813.3px;width:3.5px;height:1px;background:#a9a9a9;"></div>
<div style="position:absolute;left:8.6px;top:813.8px;width:0;height:0;opacity:1"><div style="position:absolute;transform:translate(-50%,-50%) rotate(-90deg);font-size:10.4px;line-height:12px;color:#acacac;white-space:pre">-1500</div></div>
<div style="position:absolute;left:15.5px;top:864.0px;width:3.5px;height:1px;background:#a9a9a9;"></div>
<div style="position:absolute;left:8.6px;top:864.5px;width:0;height:0;opacity:1"><div style="position:absolute;transform:translate(-50%,-50%) rotate(-90deg);font-size:10.4px;line-height:12px;color:#acacac;white-space:pre">-1400</div></div>
</div>
<div style="position:absolute;left:1245px;top:72px;width:354.3px;height:888.5px;background:#2c2c2c;border-radius:0 0 10px 0"></div>
<div style="position:absolute;left:1245px;top:72px;width:1px;height:888.5px;background:#383838;"></div>
<div style="position:absolute;left:1257px;top:83.5px;width:22px;height:22px;background:#0d7be6;border-radius:50%"></div>
<div style="position:absolute;white-space:pre;color:#fff;font-weight:400;-webkit-text-stroke:0.2px currentColor;left:1268px;transform:translateX(-50%);top:87.50px;font-size:13.00px;line-height:15.6px;">U</div>
<svg style="position:absolute;left:1283.6px;top:91.5px;" width="8" height="6" viewBox="0 0 8 6" fill="none"><path d="M1 1.5l3 3 3-3" stroke="#e0e0e0" stroke-width="1.2"/></svg>
<svg style="position:absolute;left:1502px;top:87.5px;" width="14" height="15" viewBox="0 0 14 15" fill="none"><path d="M2 1.8v11.4a0.8 0.8 0 001.2 0.7l9.6-5.7a0.8 0.8 0 000-1.4L3.2 1.1A0.8 0.8 0 002 1.8z" stroke="#e8e8e8" stroke-width="1.3"/></svg>
<svg style="position:absolute;left:1527.2px;top:91.5px;" width="8" height="6" viewBox="0 0 8 6" fill="none"><path d="M1 1.5l3 3 3-3" stroke="#e0e0e0" stroke-width="1.2"/></svg>
<div style="position:absolute;left:1542.3px;top:79.7px;width:51.3px;height:29.6px;background:#0d8ce9;border-radius:6px"></div>
<div style="position:absolute;white-space:pre;color:#fff;font-weight:700;left:1567.9px;transform:translateX(-50%);top:89.26px;font-size:10.07px;line-height:12.09px;">Share</div>
<div style="position:absolute;left:1253.4px;top:117.5px;width:48.4px;height:21.8px;background:#383838;border-radius:5px"></div>
<div style="position:absolute;white-space:pre;color:#fff;font-weight:700;left:1260.4px;top:123.17px;font-size:10.38px;line-height:12.45px;">Design</div>
<div style="position:absolute;white-space:pre;color:#b5b5b5;font-weight:400;-webkit-text-stroke:0.2px currentColor;left:1314px;top:122.62px;font-size:11.31px;line-height:13.57px;">Prototype</div>
<div style="position:absolute;white-space:pre;color:#fff;font-weight:400;-webkit-text-stroke:0.2px currentColor;left:1544.2px;top:122.93px;font-size:10.79px;line-height:12.95px;">54%</div>
<svg style="position:absolute;left:1578px;top:125.6px;" width="8" height="6" viewBox="0 0 8 6" fill="none"><path d="M1 1.5l3 3 3-3" stroke="#e0e0e0" stroke-width="1.2"/></svg>
<div style="position:absolute;left:1246px;top:147px;width:353px;height:1px;background:#3d3d3d;"></div>
<div style="position:absolute;white-space:pre;color:#fff;font-weight:700;left:1261.7px;top:163.84px;font-size:11.93px;line-height:14.31px;">Frame</div>
<svg style="position:absolute;left:1305px;top:167.5px;" width="8" height="6" viewBox="0 0 8 6" fill="none"><path d="M1 1.5l3 3 3-3" stroke="#e0e0e0" stroke-width="1.2"/></svg>
<svg style="position:absolute;left:1496px;top:164px;" width="15" height="12" viewBox="0 0 15 12" fill="none"><path d="M4 2L1 6l3 4M11 2l3 4-3 4M8.8 1.5L6.2 10.5" stroke="#e0e0e0" stroke-width="1.1"/></svg>
<svg style="position:absolute;left:1523.5px;top:164px;" width="12.5" height="12.5" viewBox="0 0 15 15" fill="none"><g stroke="#e6e6e6" stroke-width="1.3" fill="none"><rect x="5.4" y="0.9" width="4.2" height="4.2" rx="1" transform="rotate(45 7.5 3)"/><rect x="5.4" y="9.9" width="4.2" height="4.2" rx="1" transform="rotate(45 7.5 12)"/><rect x="0.9" y="5.4" width="4.2" height="4.2" rx="1" transform="rotate(45 3 7.5)"/><rect x="9.9" y="5.4" width="4.2" height="4.2" rx="1" transform="rotate(45 12 7.5)"/></g></svg>
<svg style="position:absolute;left:1549px;top:163.5px;" width="14" height="14" viewBox="0 0 14 14" fill="none"><g stroke="#e0e0e0" stroke-width="1.1" fill="none"><circle cx="8.5" cy="5.5" r="4"/><path d="M1.5 6v6.5h6.5" stroke-dasharray="1.6 1.4"/></g></svg>
<svg style="position:absolute;left:1572px;top:168px;" width="20" height="5" viewBox="0 0 20 5" fill="none"><circle cx="4.4" cy="2.5" r="1.45" fill="#e6e6e6"/><circle cx="10.2" cy="2.5" r="1.45" fill="#e6e6e6"/><circle cx="16" cy="2.5" r="1.45" fill="#e6e6e6"/></svg>
<div style="position:absolute;left:1246px;top:193.5px;width:353px;height:1px;background:#3d3d3d;"></div>
<div style="position:absolute;white-space:pre;color:#fff;font-weight:700;left:1260.6px;top:207.18px;font-size:10.04px;line-height:12.05px;">Position</div>
<div style="position:absolute;white-space:pre;color:#b3b3b3;font-weight:400;-webkit-text-stroke:0.2px currentColor;left:1260.6px;top:234.89px;font-size:9.51px;line-height:11.41px;">Alignment</div>
<div style="position:absolute;left:1260.6px;top:250.2px;width:147.4px;height:21.6px;background:#383838;border-radius:5px"></div>
<div style="position:absolute;left:1416px;top:250.2px;width:147.4px;height:21.6px;background:#383838;border-radius:5px"></div>
<div style="position:absolute;left:1309.6px;top:250.2px;width:1px;height:21.6px;background:#2c2c2c;"></div>
<div style="position:absolute;left:1359.3px;top:250.2px;width:1px;height:21.6px;background:#2c2c2c;"></div>
<div style="position:absolute;left:1464.3px;top:250.2px;width:1px;height:21.6px;background:#2c2c2c;"></div>
<div style="position:absolute;left:1514.3px;top:250.2px;width:1px;height:21.6px;background:#2c2c2c;"></div>
<svg style="position:absolute;left:1277px;top:254px;" width="14" height="14" viewBox="0 0 14 14" fill="none"><path d="M1.5 1v12" stroke="#9a9a9a" stroke-width="1"/><path d="M3.5 4.5h8M3.5 9h4.5" stroke="#e8e8e8" stroke-width="1.8"/></svg>
<svg style="position:absolute;left:1327px;top:254px;" width="14" height="14" viewBox="0 0 14 14" fill="none"><path d="M7 1v12" stroke="#9a9a9a" stroke-width="1"/><path d="M2.5 4.5h9M4 9h6" stroke="#e8e8e8" stroke-width="1.8"/></svg>
<svg style="position:absolute;left:1377px;top:254px;" width="14" height="14" viewBox="0 0 14 14" fill="none"><path d="M12.5 1v12" stroke="#9a9a9a" stroke-width="1"/><path d="M2.5 4.5h8M6 9h4.5" stroke="#e8e8e8" stroke-width="1.8"/></svg>
<svg style="position:absolute;left:1432px;top:254px;" width="14" height="14" viewBox="0 0 14 14" fill="none"><path d="M1 1.5h12" stroke="#9a9a9a" stroke-width="1"/><path d="M4.5 3.5v9M9 3.5v5" stroke="#e8e8e8" stroke-width="1.8"/></svg>
<svg style="position:absolute;left:1482px;top:254px;" width="14" height="14" viewBox="0 0 14 14" fill="none"><path d="M1 7h12" stroke="#9a9a9a" stroke-width="1"/><path d="M4.5 2v10M9 4v6" stroke="#e8e8e8" stroke-width="1.8"/></svg>
<svg style="position:absolute;left:1532px;top:254px;" width="14" height="14" viewBox="0 0 14 14" fill="none"><path d="M1 12.5h12" stroke="#9a9a9a" stroke-width="1"/><path d="M4.5 1.5v9M9 5.5v5" stroke="#e8e8e8" stroke-width="1.8"/></svg>
<svg style="position:absolute;left:1572px;top:258.5px;" width="20" height="5" viewBox="0 0 20 5" fill="none"><circle cx="4.4" cy="2.5" r="1.45" fill="#e6e6e6"/><circle cx="10.3" cy="2.5" r="1.45" fill="#e6e6e6"/><circle cx="16.2" cy="2.5" r="1.45" fill="#e6e6e6"/></svg>
<div style="position:absolute;white-space:pre;color:#b3b3b3;font-weight:400;-webkit-text-stroke:0.2px currentColor;left:1260.6px;top:279.73px;font-size:9.28px;line-height:11.13px;">Position</div>
<div style="position:absolute;left:1260.6px;top:295px;width:147.4px;height:22px;background:#383838;border-radius:5px"></div>
<div style="position:absolute;left:1416px;top:295px;width:147.4px;height:22px;background:#383838;border-radius:5px"></div>
<div style="position:absolute;white-space:pre;color:#9a9a9a;font-weight:400;-webkit-text-stroke:0.2px currentColor;left:1268.5px;top:299.90px;font-size:11.50px;line-height:13.8px;">X</div>
<div style="position:absolute;white-space:pre;color:#fff;font-weight:400;-webkit-text-stroke:0.2px currentColor;left:1282.9px;top:299.67px;font-size:11.89px;line-height:14.26px;">-9098</div>
<div style="position:absolute;white-space:pre;color:#9a9a9a;font-weight:400;-webkit-text-stroke:0.2px currentColor;left:1423.5px;top:299.90px;font-size:11.50px;line-height:13.8px;">Y</div>
<div style="position:absolute;white-space:pre;color:#fff;font-weight:400;-webkit-text-stroke:0.2px currentColor;left:1438.2px;top:299.76px;font-size:11.73px;line-height:14.08px;">4394</div>
<div style="position:absolute;white-space:pre;color:#b3b3b3;font-weight:400;-webkit-text-stroke:0.2px currentColor;left:1260.6px;top:324.40px;font-size:9.49px;line-height:11.39px;">Transform</div>
<div style="position:absolute;left:1260.6px;top:339.7px;width:147.4px;height:22px;background:#383838;border-radius:5px"></div>
<div style="position:absolute;left:1416px;top:339.7px;width:147.4px;height:22px;background:#383838;border-radius:5px"></div>
<div style="position:absolute;left:1464.3px;top:339.7px;width:1px;height:22px;background:#2c2c2c;"></div>
<div style="position:absolute;left:1514.3px;top:339.7px;width:1px;height:22px;background:#2c2c2c;"></div>
<svg style="position:absolute;left:1267px;top:344px;" width="12" height="12" viewBox="0 0 12 12" fill="none"><path d="M1.5 2v8.5H10" stroke="#9a9a9a" stroke-width="1.1"/><path d="M1.5 5a5 5 0 015 5.5" stroke="#9a9a9a" stroke-width="1" stroke-dasharray="1 1"/></svg>
<div style="position:absolute;white-space:pre;color:#fff;font-weight:400;-webkit-text-stroke:0.2px currentColor;left:1282.9px;top:344.70px;font-size:11.50px;line-height:13.8px;">0°</div>
<svg style="position:absolute;left:1432px;top:343px;" width="15" height="15" viewBox="0 0 15 15" fill="none"><path d="M7.5 5.5l4 4-4 4-4-4z" stroke="#e8e8e8" stroke-width="1.2"/><path d="M4 4.5a4.5 4.5 0 017-1.5" stroke="#e8e8e8" stroke-width="1.2"/><path d="M11 1v2.5H8.5" stroke="#e8e8e8" stroke-width="1.1"/></svg>
<svg style="position:absolute;left:1482px;top:343.5px;" width="15" height="14" viewBox="0 0 15 14" fill="none"><path d="M7.5 0.5v13" stroke="#e8e8e8" stroke-width="1.2"/><path d="M1 3.5l4.5 3.5L1 10.5z M14 3.5L9.5 7l4.5 3.5z" stroke="#e8e8e8" stroke-width="1.1"/></svg>
<svg style="position:absolute;left:1532px;top:343.5px;" width="14" height="15" viewBox="0 0 14 15" fill="none"><path d="M0.5 7.5h13" stroke="#e8e8e8" stroke-width="1.2"/><path d="M3.5 1l3.5 4.5L10.5 1z M3.5 14L7 9.5l3.5 4.5z" stroke="#e8e8e8" stroke-width="1.1"/></svg>
<div style="position:absolute;left:1246px;top:377px;width:353px;height:1px;background:#3d3d3d;"></div>
<div style="position:absolute;white-space:pre;color:#fff;font-weight:700;left:1260.6px;top:391.66px;font-size:10.07px;line-height:12.08px;">Layout</div>
<svg style="position:absolute;left:1549px;top:390.5px;" width="14" height="14" viewBox="0 0 14 14" fill="none"><g stroke="#e8e8e8" stroke-width="1.2"><path d="M1 1l4 4M5 2v3H2M13 1l-4 4M9 2v3h3M1 13l4-4M5 12V9H2M13 13l-4-4M9 12V9h3"/></g></svg>
<svg style="position:absolute;left:1575px;top:390px;" width="15" height="15" viewBox="0 0 15 15" fill="none"><rect x="1" y="1" width="4.5" height="13" rx="2.2" stroke="#e8e8e8" stroke-width="1.2"/><circle cx="11" cy="4" r="2.5" stroke="#e8e8e8" stroke-width="1.2"/><path d="M11 8.5v5M8.5 11h5" stroke="#e8e8e8" stroke-width="1.2"/></svg>
<div style="position:absolute;white-space:pre;color:#b3b3b3;font-weight:400;-webkit-text-stroke:0.2px currentColor;left:1260.6px;top:419.11px;font-size:9.32px;line-height:11.19px;">Dimensions</div>
<div style="position:absolute;left:1260.6px;top:434.3px;width:147.4px;height:22px;background:#383838;border-radius:5px"></div>
<div style="position:absolute;left:1416px;top:434.3px;width:147.4px;height:22px;background:#383838;border-radius:5px"></div>
<div style="position:absolute;white-space:pre;color:#9a9a9a;font-weight:400;-webkit-text-stroke:0.2px currentColor;left:1266.5px;top:439.20px;font-size:11.50px;line-height:13.8px;">W</div>
<div style="position:absolute;white-space:pre;color:#fff;font-weight:400;-webkit-text-stroke:0.2px currentColor;left:1282.9px;top:439.68px;font-size:10.70px;line-height:12.84px;">1295</div>
<div style="position:absolute;white-space:pre;color:#9a9a9a;font-weight:400;-webkit-text-stroke:0.2px currentColor;left:1423.5px;top:439.20px;font-size:11.50px;line-height:13.8px;">H</div>
<div style="position:absolute;white-space:pre;color:#fff;font-weight:400;-webkit-text-stroke:0.2px currentColor;left:1438.2px;top:439.05px;font-size:11.75px;line-height:14.1px;">606</div>
<svg style="position:absolute;left:1575.5px;top:439px;" width="13" height="13" viewBox="0 0 13 13" fill="none"><rect x="0.7" y="0.7" width="11.6" height="11.6" rx="1.5" stroke="#e8e8e8" stroke-width="1.2"/><path d="M3.5 3.5h2.5M3.5 3.5v2.5M9.5 9.5H7M9.5 9.5V7" stroke="#e8e8e8" stroke-width="1.2"/></svg>
<div style="position:absolute;white-space:pre;color:#b3b3b3;font-weight:400;-webkit-text-stroke:0.2px currentColor;left:1260.6px;top:464.17px;font-size:9.38px;line-height:11.26px;">Spacing</div>
<div style="position:absolute;left:1260.6px;top:479.5px;width:147.4px;height:22px;background:#383838;border-radius:5px"></div>
<svg style="position:absolute;left:1265px;top:485px;" width="13" height="11" viewBox="0 0 13 11" fill="none"><rect x="0.7" y="1" width="3.8" height="9" rx="1.5" stroke="#9a9a9a" stroke-width="1"/><rect x="8.5" y="1" width="3.8" height="9" rx="1.5" stroke="#9a9a9a" stroke-width="1"/><path d="M6.5 0v11" stroke="#bbb" stroke-width="1"/></svg>
<div style="position:absolute;white-space:pre;color:#fff;font-weight:400;-webkit-text-stroke:0.2px currentColor;left:1282.9px;top:484.56px;font-size:11.24px;line-height:13.49px;">79</div>
<div style="position:absolute;left:1260.3px;top:516.8px;width:14.7px;height:14.8px;background:#383838;border-radius:4px"></div>
<svg style="position:absolute;left:1262.5px;top:519px;" width="10" height="10" viewBox="0 0 10 10" fill="none"><path d="M1.5 5l2.5 2.5 4.5-5" stroke="#fff" stroke-width="1.2"/></svg>
<div style="position:absolute;white-space:pre;color:#fff;font-weight:400;-webkit-text-stroke:0.2px currentColor;left:1282.9px;top:517.82px;font-size:11.31px;line-height:13.57px;">Clip content</div>
<div style="position:absolute;left:1246px;top:550.5px;width:353px;height:1px;background:#3d3d3d;"></div>
<div style="position:absolute;white-space:pre;color:#fff;font-weight:700;left:1260.6px;top:564.77px;font-size:10.38px;line-height:12.45px;">Appearance</div>
<svg style="position:absolute;left:1547px;top:564px;" width="16" height="11" viewBox="0 0 16 11" fill="none"><path d="M1 5.5C3 2 5.5 1 8 1s5 1 7 4.5C13 9 10.5 10 8 10S3 9 1 5.5z" stroke="#e8e8e8" stroke-width="1.2"/><circle cx="8" cy="5.5" r="1.5" stroke="#e8e8e8" stroke-width="1.1"/></svg>
<svg style="position:absolute;left:1576.5px;top:562.5px;" width="11" height="14" viewBox="0 0 11 14" fill="none"><path d="M5.5 1C3.5 4 1 6.5 1 9a4.5 4.5 0 009 0c0-2.5-2.5-5-4.5-8z" stroke="#e8e8e8" stroke-width="1.2"/></svg>
<div style="position:absolute;white-space:pre;color:#b3b3b3;font-weight:400;-webkit-text-stroke:0.2px currentColor;left:1260.6px;top:594.00px;font-size:9.50px;line-height:11.4px;">Opacity</div>
<div style="position:absolute;white-space:pre;color:#b3b3b3;font-weight:400;-webkit-text-stroke:0.2px currentColor;left:1416px;top:594.02px;font-size:9.46px;line-height:11.35px;">Corner radius</div>
<div style="position:absolute;left:1260.6px;top:609.3px;width:147.4px;height:22px;background:#383838;border-radius:5px"></div>
<div style="position:absolute;left:1416px;top:609.3px;width:147.4px;height:22px;background:#383838;border-radius:5px"></div>
<svg style="position:absolute;left:1266.5px;top:614px;" width="12" height="12" viewBox="0 0 12 12" fill="none"><rect x="0.7" y="0.7" width="10.6" height="10.6" rx="1.5" stroke="#bbb" stroke-width="1.1"/><g fill="#999"><rect x="7.5" y="3" width="1.2" height="1.2"/><rect x="5" y="5.5" width="1.2" height="1.2"/><rect x="7.5" y="5.5" width="1.2" height="1.2"/><rect x="3" y="8" width="1.2" height="1.2"/><rect x="5" y="8" width="1.2" height="1.2"/><rect x="7.5" y="8" width="1.2" height="1.2"/></g></svg>
<div style="position:absolute;white-space:pre;color:#fff;font-weight:400;-webkit-text-stroke:0.2px currentColor;left:1284px;top:615.05px;font-size:10.09px;line-height:12.1px;">100%</div>
<svg style="position:absolute;left:1423px;top:615px;" width="10" height="10" viewBox="0 0 10 10" fill="none"><path d="M1.5 9.5V5a3.5 3.5 0 013.5-3.5h4" stroke="#9a9a9a" stroke-width="1.2"/></svg>
<div style="position:absolute;white-space:pre;color:#fff;font-weight:400;-webkit-text-stroke:0.2px currentColor;left:1438.2px;top:614.20px;font-size:11.50px;line-height:13.8px;">0</div>
<svg style="position:absolute;left:1575.5px;top:614px;" width="13" height="13" viewBox="0 0 13 13" fill="none"><path d="M1 4V2.5A1.5 1.5 0 012.5 1H4M9 1h1.5A1.5 1.5 0 0112 2.5V4M12 9v1.5a1.5 1.5 0 01-1.5 1.5H9M4 12H2.5A1.5 1.5 0 011 10.5V9" stroke="#e8e8e8" stroke-width="1.2"/></svg>
<div style="position:absolute;left:1246px;top:647px;width:353px;height:1px;background:#3d3d3d;"></div>
<div style="position:absolute;white-space:pre;color:#fff;font-weight:700;left:1260.6px;top:661.15px;font-size:9.42px;line-height:11.3px;">Fill</div>
<svg style="position:absolute;left:1549.5px;top:660px;" width="12" height="12" viewBox="0 0 12 12" fill="none"><g stroke="#e8e8e8" stroke-width="1.1"><circle cx="3" cy="3" r="2"/><circle cx="9" cy="3" r="2"/><circle cx="3" cy="9" r="2"/><circle cx="9" cy="9" r="2"/></g></svg>
<svg style="position:absolute;left:1576.0px;top:660.0px;" width="12" height="12" viewBox="0 0 12 12" fill="none"><path d="M6.0 0.5v11M0.5 6.0h11" stroke="#e0e0e0" stroke-width="1.2"/></svg>
<div style="position:absolute;left:1261.5px;top:689.7px;width:274px;height:22px;background:#383838;border-radius:5px"></div>
<div style="position:absolute;left:1485.7px;top:689.7px;width:1px;height:22px;background:#2c2c2c;"></div>
<div style="position:absolute;left:1265.8px;top:694px;width:13.4px;height:14px;background:#ffffff;border-radius:2px"></div>
<div style="position:absolute;white-space:pre;color:#fff;font-weight:400;-webkit-text-stroke:0.2px currentColor;left:1284.6px;top:694.64px;font-size:11.60px;line-height:13.92px;letter-spacing:1.1px;transform:scaleX(0.72);transform-origin:0 50%;-webkit-text-stroke:0.35px currentColor">FFFFFF</div>
<div style="position:absolute;white-space:pre;color:#fff;font-weight:400;-webkit-text-stroke:0.2px currentColor;left:1493px;top:695.06px;font-size:10.91px;line-height:13.09px;">100</div>
<div style="position:absolute;white-space:pre;color:#cfcfcf;font-weight:400;-webkit-text-stroke:0.2px currentColor;left:1521.6px;top:695.00px;font-size:11.00px;line-height:13.2px;">%</div>
<svg style="position:absolute;left:1547px;top:695.3px;" width="16" height="11" viewBox="0 0 16 11" fill="none"><path d="M1 5.5C3 2 5.5 1 8 1s5 1 7 4.5C13 9 10.5 10 8 10S3 9 1 5.5z" stroke="#e8e8e8" stroke-width="1.2"/><circle cx="8" cy="5.5" r="1.5" stroke="#e8e8e8" stroke-width="1.1"/></svg>
<div style="position:absolute;left:1576px;top:700.3px;width:12px;height:1.2px;background:#e8e8e8;"></div>
<div style="position:absolute;left:1246px;top:728px;width:353px;height:1px;background:#3d3d3d;"></div>
<div style="position:absolute;white-space:pre;color:#c4c4c4;font-weight:700;left:1260.4px;top:742.33px;font-size:10.28px;line-height:12.34px;">Stroke</div>
<svg style="position:absolute;left:1576.0px;top:741.7px;" width="12" height="12" viewBox="0 0 12 12" fill="none"><path d="M6.0 0.5v11M0.5 6.0h11" stroke="#e0e0e0" stroke-width="1.2"/></svg>
<div style="position:absolute;left:1246px;top:766.5px;width:353px;height:1px;background:#3d3d3d;"></div>
<div style="position:absolute;white-space:pre;color:#c4c4c4;font-weight:700;left:1260.4px;top:780.64px;font-size:10.44px;line-height:12.52px;">Effects</div>
<svg style="position:absolute;left:1576.0px;top:780.1px;" width="12" height="12" viewBox="0 0 12 12" fill="none"><path d="M6.0 0.5v11M0.5 6.0h11" stroke="#e0e0e0" stroke-width="1.2"/></svg>
<div style="position:absolute;left:1246px;top:805px;width:353px;height:1px;background:#3d3d3d;"></div>
<div style="position:absolute;white-space:pre;color:#fff;font-weight:700;left:1260.4px;top:819.14px;font-size:10.27px;line-height:12.32px;">Selection colors</div>
<div style="position:absolute;left:1260.4px;top:847.1px;width:276.3px;height:22.2px;background:#383838;border-radius:5px"></div>
<div style="position:absolute;left:1486.4px;top:847.1px;width:1px;height:22.2px;background:#2c2c2c;"></div>
<div style="position:absolute;left:1265.2px;top:851.4px;width:13px;height:13.5px;background:#000000;border-radius:2px"></div>
<div style="position:absolute;white-space:pre;color:#fff;font-weight:400;-webkit-text-stroke:0.2px currentColor;left:1283.4px;top:851.76px;font-size:11.90px;line-height:14.28px;">000000</div>
<div style="position:absolute;white-space:pre;color:#fff;font-weight:400;-webkit-text-stroke:0.2px currentColor;left:1493.5px;top:852.36px;font-size:10.91px;line-height:13.09px;">100</div>
<div style="position:absolute;white-space:pre;color:#cfcfcf;font-weight:400;-webkit-text-stroke:0.2px currentColor;left:1522px;top:852.30px;font-size:11.00px;line-height:13.2px;">%</div>
<div style="position:absolute;left:1260.4px;top:876.8px;width:276.3px;height:22.2px;background:#383838;border-radius:5px"></div>
<div style="position:absolute;left:1486.4px;top:876.8px;width:1px;height:22.2px;background:#2c2c2c;"></div>
<div style="position:absolute;left:1265.2px;top:881.0999999999999px;width:13px;height:13.5px;background:#ffffff;border-radius:2px"></div>
<div style="position:absolute;white-space:pre;color:#fff;font-weight:400;-webkit-text-stroke:0.2px currentColor;left:1283.4px;top:881.64px;font-size:11.60px;line-height:13.92px;letter-spacing:1.1px;transform:scaleX(0.72);transform-origin:0 50%;-webkit-text-stroke:0.35px currentColor">FFFFFF</div>
<div style="position:absolute;white-space:pre;color:#fff;font-weight:400;-webkit-text-stroke:0.2px currentColor;left:1493.5px;top:882.06px;font-size:10.91px;line-height:13.09px;">100</div>
<div style="position:absolute;white-space:pre;color:#cfcfcf;font-weight:400;-webkit-text-stroke:0.2px currentColor;left:1522px;top:882.00px;font-size:11.00px;line-height:13.2px;">%</div>
<div style="position:absolute;left:1246px;top:914px;width:353px;height:1px;background:#3d3d3d;"></div>
<div style="position:absolute;white-space:pre;color:#c4c4c4;font-weight:700;left:1260.4px;top:928.92px;font-size:10.14px;line-height:12.17px;">Layout grid</div>
<svg style="position:absolute;left:1576.0px;top:928.0px;" width="12" height="12" viewBox="0 0 12 12" fill="none"><path d="M6.0 0.5v11M0.5 6.0h11" stroke="#e0e0e0" stroke-width="1.2"/></svg>
<div style="position:absolute;left:1246px;top:952.5px;width:353px;height:1px;background:#3d3d3d;"></div>
<div style="position:absolute;left:1547.8px;top:908.8px;width:29.4px;height:29.4px;background:#232323;border-radius:50%"></div>
<div style="position:absolute;white-space:pre;color:#e8e8e8;font-weight:400;-webkit-text-stroke:0.2px currentColor;left:1562.5px;transform:translateX(-50%);top:914.30px;font-size:15.00px;line-height:18.0px;">?</div>
<div style="position:absolute;left:245px;top:92px;width:1000px;height:868.5px;background:#b1b1b1;"></div>
<div style="position:absolute;left:1242.5px;top:92px;width:2.5px;height:868.5px;background:#bdbdbd;"></div>
<div style="position:absolute;white-space:pre;color:#333333;font-weight:400;-webkit-text-stroke:0.2px currentColor;left:353px;top:220.50px;font-size:10.49px;line-height:12.59px;">1. Dashboard</div>
<div style="position:absolute;left:1236.5px;top:140.5px;width:5.5px;height:377px;background:#7b7b7b;border-radius:3px;box-shadow:0 0 0 1px #c4c4c4"></div>
<div style="position:absolute;left:254.5px;top:953px;width:97.5px;height:4.5px;background:#7b7b7b;border-radius:3px;box-shadow:0 0 0 1px #c4c4c4"></div>
<div style="position:absolute;left:353px;top:239px;width:876px;height:721.5px;overflow:hidden;background:#fff">
<div style="position:absolute;left:-353px;top:-239px;width:1600px;height:1036px">
<div style="position:absolute;left:353px;top:239px;width:876px;height:18px;background:#000;"></div>
<svg style="position:absolute;left:363.5px;top:243px;" width="8" height="10" viewBox="0 0 8 10" fill="none"><path d="M6.1 5.3c0-1.1.9-1.6.9-1.7-.5-.7-1.3-.8-1.6-.9-.7-.1-1.3.4-1.7.4s-.9-.4-1.4-.4C1.6 2.7.8 3.2.4 3.9c-.8 1.4-.2 3.5.6 4.6.4.6.8 1.1 1.4 1.1.6 0 .8-.4 1.5-.4s.9.4 1.5.4c.6 0 1-.6 1.4-1.1.5-.6.6-1.3.6-1.3s-1.3-.5-1.3-2zM5 1.9c.3-.4.5-.9.5-1.5-.5 0-1 .3-1.3.7-.3.3-.5.9-.5 1.4.5 0 1-.2 1.3-.6z" fill="#fff"/></svg>
<div style="position:absolute;white-space:pre;color:#fff;font-weight:700;left:380.6px;top:245.03px;font-size:6.78px;line-height:8.13px;">Chrome</div>
<div style="position:absolute;white-space:pre;color:#f0f0f0;font-weight:400;-webkit-text-stroke:0.2px currentColor;left:416.7px;top:244.93px;font-size:6.95px;line-height:8.34px;">File</div>
<div style="position:absolute;white-space:pre;color:#f0f0f0;font-weight:400;-webkit-text-stroke:0.2px currentColor;left:438.2px;top:244.93px;font-size:6.95px;line-height:8.34px;">Edit</div>
<div style="position:absolute;white-space:pre;color:#f0f0f0;font-weight:400;-webkit-text-stroke:0.2px currentColor;left:461px;top:244.93px;font-size:6.95px;line-height:8.34px;">View</div>
<div style="position:absolute;white-space:pre;color:#f0f0f0;font-weight:400;-webkit-text-stroke:0.2px currentColor;left:486.8px;top:244.93px;font-size:6.95px;line-height:8.34px;">History</div>
<div style="position:absolute;white-space:pre;color:#f0f0f0;font-weight:400;-webkit-text-stroke:0.2px currentColor;left:519.6px;top:244.93px;font-size:6.95px;line-height:8.34px;">Bookmarks</div>
<div style="position:absolute;white-space:pre;color:#f0f0f0;font-weight:400;-webkit-text-stroke:0.2px currentColor;left:564.4px;top:244.93px;font-size:6.95px;line-height:8.34px;">Profiles</div>
<div style="position:absolute;white-space:pre;color:#f0f0f0;font-weight:400;-webkit-text-stroke:0.2px currentColor;left:598.4px;top:244.93px;font-size:6.95px;line-height:8.34px;">Tab</div>
<div style="position:absolute;white-space:pre;color:#f0f0f0;font-weight:400;-webkit-text-stroke:0.2px currentColor;left:619.8px;top:244.93px;font-size:6.95px;line-height:8.34px;">Window</div>
<div style="position:absolute;white-space:pre;color:#f0f0f0;font-weight:400;-webkit-text-stroke:0.2px currentColor;left:655.2px;top:244.93px;font-size:6.95px;line-height:8.34px;">Help</div>
<svg style="position:absolute;left:995px;top:244px;" width="7" height="9" viewBox="0 0 7 9" fill="none"><path d="M1.5 1.5h3v6h-3z" stroke="#e6e6e6" stroke-width="1"/></svg>
<svg style="position:absolute;left:1011px;top:243px;" width="10" height="10" viewBox="0 0 10 10" fill="none"><rect x="1" y="4" width="8" height="5" rx="1" fill="#e6e6e6"/><rect x="3" y="1.5" width="4" height="2.5" fill="#e6e6e6"/></svg>
<svg style="position:absolute;left:1029px;top:243.5px;" width="11" height="9" viewBox="0 0 11 9" fill="none"><rect x="0.5" y="0.5" width="10" height="6" rx="0.5" fill="#e6e6e6"/><path d="M4 7h3l.5 2h-4z" fill="#e6e6e6"/></svg>
<svg style="position:absolute;left:1048px;top:243px;" width="8" height="11" viewBox="0 0 8 11" fill="none"><path d="M4 1v9M1.5 3l2.5 2.5L6.5 3M1 5.5l3 2.5 3-2.5" stroke="#e6e6e6" stroke-width="1"/></svg>
<svg style="position:absolute;left:1064px;top:243.5px;" width="10" height="10" viewBox="0 0 10 10" fill="none"><circle cx="5" cy="5" r="4" stroke="#e6e6e6" stroke-width="1"/><path d="M4 3.3v3.4L6.7 5z" fill="#e6e6e6"/></svg>
<svg style="position:absolute;left:1080px;top:244.5px;" width="16" height="8" viewBox="0 0 16 8" fill="none"><rect x="0.5" y="0.5" width="13" height="7" rx="2" stroke="#777" stroke-width="1"/><rect x="2" y="2" width="6.5" height="4" fill="#e6e6e6"/></svg>
<svg style="position:absolute;left:1103px;top:244px;" width="11" height="9" viewBox="0 0 11 9" fill="none"><path d="M1 3.5a6.5 6.5 0 019 0M2.8 5.5a4 4 0 015.4 0" stroke="#e6e6e6" stroke-width="1.2"/><circle cx="5.5" cy="7.5" r="1" fill="#e6e6e6"/></svg>
<svg style="position:absolute;left:1121.5px;top:244px;" width="9" height="9" viewBox="0 0 9 9" fill="none"><circle cx="3.8" cy="3.8" r="2.8" stroke="#e6e6e6" stroke-width="1"/><path d="M6 6l2.5 2.5" stroke="#e6e6e6" stroke-width="1.1"/></svg>
<svg style="position:absolute;left:1139px;top:243.5px;" width="9" height="10" viewBox="0 0 9 10" fill="none"><rect x="0.5" y="0.5" width="8" height="4" rx="2" fill="#e6e6e6"/><rect x="0.5" y="5.5" width="8" height="4" rx="2" stroke="#e6e6e6" stroke-width="0.8"/></svg>
<div style="position:absolute;white-space:pre;color:#f0f0f0;font-weight:400;-webkit-text-stroke:0.2px currentColor;left:1156.6px;top:245.00px;font-size:6.84px;line-height:8.2px;">Tue Feb 25  9:00 AM</div>
<div style="position:absolute;left:353px;top:257px;width:876px;height:36px;background:#3d44bf;"></div>
<div style="position:absolute;left:353px;top:292.2px;width:876px;height:1px;background:#363cbb;"></div>
<svg style="position:absolute;left:373px;top:268.5px;" width="12" height="13" viewBox="0 0 12 13" fill="none"><path d="M1 1.5h3.5v3L6 3.3 7.5 4.5v-3H11V7a5 5 0 01-10 0z" fill="#fff"/><path d="M6 4.8l.7 1.6 1.6.2-1.2 1.1.3 1.6L6 8.5l-1.4.8.3-1.6-1.2-1.1 1.6-.2z" fill="#3d44bf"/></svg>
<div style="position:absolute;white-space:pre;color:#fff;font-weight:700;left:387px;top:270.90px;font-size:8.17px;line-height:9.8px;">Logoipsum</div>
<div style="position:absolute;left:630px;top:264.4px;width:203.2px;height:21.2px;background:#2b2f8b;border-radius:3.5px"></div>
<svg style="position:absolute;left:636.5px;top:270px;" width="10" height="10" viewBox="0 0 10 10" fill="none"><circle cx="4.3" cy="4.3" r="3.2" stroke="#fff" stroke-width="1.1"/><path d="M6.7 6.7l2.5 2.5" stroke="#fff" stroke-width="1.1"/></svg>
<div style="position:absolute;white-space:pre;color:#e8e9f5;font-weight:400;-webkit-text-stroke:0.2px currentColor;left:650.7px;top:270.97px;font-size:8.06px;line-height:9.67px;">Search reports, users, workspace</div>
<div style="position:absolute;white-space:pre;color:#fff;font-weight:700;left:1032.8px;top:271.07px;font-size:7.88px;line-height:9.46px;">The Only Broker</div>
<svg style="position:absolute;left:1098px;top:272.5px;" width="7" height="5" viewBox="0 0 7 5" fill="none"><path d="M1 1l2.5 2.5L6 1" stroke="#fff" stroke-width="1"/></svg>
<svg style="position:absolute;left:1119.5px;top:270px;" width="10" height="10" viewBox="0 0 10 10" fill="none"><circle cx="5" cy="5" r="4.2" stroke="#fff" stroke-width="1"/><path d="M5 4.5v3" stroke="#fff" stroke-width="1.2"/><circle cx="5" cy="3" r=".6" fill="#fff"/></svg>
<svg style="position:absolute;left:1143.5px;top:269.5px;" width="9" height="11" viewBox="0 0 9 11" fill="none"><path d="M4.5 1.5a3 3 0 00-3 3V7L.8 8.3h7.4L7.5 7V4.5a3 3 0 00-3-3z" stroke="#fff" stroke-width="1"/><path d="M3.5 9.5a1 1 0 002 0" stroke="#fff" stroke-width="1"/></svg>
<svg style="position:absolute;left:1167px;top:270px;" width="10" height="10" viewBox="0 0 10 10" fill="none"><path d="M5 .8l3.6 2.1v4.2L5 9.2 1.4 7.1V2.9z" stroke="#fff" stroke-width="1"/><circle cx="5" cy="5" r="1.3" stroke="#fff" stroke-width="1"/></svg>
<div style="position:absolute;left:1192.7px;top:266.9px;width:16.4px;height:16.4px;border-radius:50%;background:radial-gradient(circle at 50% 40%,#c99a86 0 18%,#2a2a33 30%,#15161c 70%);box-shadow:inset 2px 0 2px rgba(120,160,220,0.5)"></div>
<div style="position:absolute;left:353px;top:293.2px;width:128.5px;height:670px;background:#f2f2f2;"></div>
<div style="position:absolute;left:363.4px;top:308.3px;width:108px;height:20px;background:#e3e3e3;border-radius:3px"></div>
<div style="position:absolute;left:363.4px;top:308.3px;width:3px;height:20px;background:#3a40c4;border-radius:3px 0 0 3px"></div>
<svg style="position:absolute;left:368px;top:313px;" width="10" height="10" viewBox="0 0 10 10" fill="none"><path d="M5 1L1 4.5V9h3V6.5h2V9h3V4.5z" fill="#333"/></svg>
<div style="position:absolute;white-space:pre;color:#1a1a1a;font-weight:400;-webkit-text-stroke:0.2px currentColor;left:383.4px;top:313.77px;font-size:8.38px;line-height:10.06px;-webkit-text-stroke:0.45px #1a1a1a">Dashboard</div>
<svg style="position:absolute;left:368px;top:333.5px;" width="10" height="10" viewBox="0 0 10 10" fill="none"><circle cx="5" cy="5" r="3.8" stroke="#333" stroke-width="1.1"/><path d="M5 5V1.2A3.8 3.8 0 018.8 5z" fill="#333"/></svg>
<div style="position:absolute;white-space:pre;color:#222;font-weight:400;-webkit-text-stroke:0.2px currentColor;left:383.4px;top:334.06px;font-size:8.74px;line-height:10.49px;">Reports</div>
<svg style="position:absolute;left:368px;top:354.3px;" width="10" height="10" viewBox="0 0 10 10" fill="none"><circle cx="5" cy="5" r="3.8" stroke="#333" stroke-width="1.1"/><path d="M5 2.8V5l1.5 1" stroke="#333" stroke-width="1"/></svg>
<div style="position:absolute;white-space:pre;color:#222;font-weight:400;-webkit-text-stroke:0.2px currentColor;left:383.4px;top:355.15px;font-size:8.24px;line-height:9.89px;">Events</div>
<svg style="position:absolute;left:367.5px;top:374px;" width="11" height="10" viewBox="0 0 11 10" fill="none"><circle cx="2.4" cy="2.6" r="1.4" fill="#333"/><circle cx="8.6" cy="2.6" r="1.4" fill="#333"/><circle cx="5.5" cy="4" r="1.6" fill="#333"/><path d="M0 7.3a2.3 2.3 0 014.6 0zM6.4 7.3a2.3 2.3 0 014.6 0z" fill="#333"/><path d="M2.5 9.8a3 3 0 016 0z" fill="#333"/></svg>
<div style="position:absolute;white-space:pre;color:#222;font-weight:400;-webkit-text-stroke:0.2px currentColor;left:384.2px;top:374.86px;font-size:8.23px;line-height:9.88px;">Users</div>
<svg style="position:absolute;left:368.5px;top:394px;" width="9" height="11" viewBox="0 0 9 11" fill="none"><rect x="1" y="1" width="7" height="9" rx="1" stroke="#333" stroke-width="1.1"/><path d="M3 3.5h3M3 5.5h3" stroke="#333" stroke-width="0.9"/><rect x="3.5" y="7.5" width="2" height="2.5" fill="#333"/></svg>
<div style="position:absolute;white-space:pre;color:#222;font-weight:400;-webkit-text-stroke:0.2px currentColor;left:383.7px;top:395.13px;font-size:8.29px;line-height:9.95px;">Organization &amp; Teams</div>
<div style="position:absolute;white-space:pre;color:#7a7a7a;font-weight:400;-webkit-text-stroke:0.2px currentColor;left:369.5px;top:416.50px;font-size:8.33px;line-height:9.99px;">Workspace</div>
<svg style="position:absolute;left:368px;top:431.3px;" width="10" height="10" viewBox="0 0 10 10" fill="none"><circle cx="5" cy="5" r="4.2" stroke="#333" stroke-width="1"/><path d="M5 2.6v4.8M2.6 5h4.8" stroke="#333" stroke-width="1"/></svg>
<div style="position:absolute;white-space:pre;color:#222;font-weight:400;-webkit-text-stroke:0.2px currentColor;left:382.9px;top:432.10px;font-size:8.33px;line-height:10.0px;">New Workspace</div>
<div style="position:absolute;white-space:pre;color:#7b7b7b;font-weight:400;-webkit-text-stroke:0.2px currentColor;left:492px;top:310.06px;font-size:7.40px;line-height:8.88px;">Rakuten Viber &gt; Dashboard</div>
<div style="position:absolute;white-space:pre;color:#111;font-weight:700;left:492px;top:320.97px;font-size:18.88px;line-height:22.66px;">Good evening Uchit,</div>
<div style="position:absolute;white-space:pre;color:#222;font-weight:700;left:492px;top:361.24px;font-size:6.93px;line-height:8.32px;">Your Product</div>
<svg style="position:absolute;left:1177.5px;top:360.5px;" width="8" height="8" viewBox="0 0 8 8" fill="none"><path d="M4 0.5v7M0.5 4h7" stroke="#222" stroke-width="1"/></svg>
<div style="position:absolute;white-space:pre;color:#222;font-weight:700;left:1188.5px;top:361.19px;font-size:7.01px;line-height:8.42px;">Add New</div>
<div style="position:absolute;left:492px;top:384.6px;width:239px;height:141.29999999999995px;background:#fff;border-radius:4px;box-shadow:inset 0 0 0 1px #e6e6e6"></div>
<div style="position:absolute;left:736.2px;top:384.7px;width:238.19999999999993px;height:140.59999999999997px;background:#fff;border-radius:4px;box-shadow:inset 0 0 0 1px #e6e6e6"></div>
<div style="position:absolute;left:980px;top:384.7px;width:238.4000000000001px;height:140.59999999999997px;background:#fff;border-radius:4px;box-shadow:inset 0 0 0 1px #e6e6e6"></div>
<div style="position:absolute;left:492px;top:530.6px;width:482px;height:140.69999999999993px;background:#fff;border-radius:4px;box-shadow:inset 0 0 0 1px #e6e6e6"></div>
<div style="position:absolute;left:980.1px;top:531.4px;width:238.30000000000007px;height:139.60000000000002px;background:#fff;border-radius:4px;box-shadow:inset 0 0 0 1px #e6e6e6"></div>
<div style="position:absolute;left:492px;top:677px;width:726.7px;height:139.70000000000005px;background:#fff;border-radius:4px;box-shadow:inset 0 0 0 1px #e6e6e6"></div>
<div style="position:absolute;white-space:pre;color:#111;font-weight:700;left:502.4px;top:396.95px;font-size:19.75px;line-height:23.69px;">5.6M</div>
<div style="position:absolute;white-space:pre;color:#333;font-weight:700;left:502px;top:425.13px;font-size:6.94px;line-height:8.33px;">Total Users</div>
<svg style="position:absolute;left:0px;top:0px;" width="1600" height="1036" viewBox="0 0 1600 1036" fill="none"><path d="M502.0,463.9 C505.1,463.4 514.9,459.9 520.7,460.7 C526.5,461.5 532.5,467.4 536.6,468.8 C540.7,470.2 539.2,468.1 545.1,468.8 C551.0,469.5 564.7,470.7 572.0,472.9 C579.3,475.1 582.7,481.3 589.0,482.2 C595.3,483.1 597.6,478.5 609.8,478.5 C622.0,478.5 649.6,479.1 662.2,482.0 C674.8,484.9 679.7,493.8 685.4,495.6 C691.1,497.4 690.4,495.8 696.3,493.0 C702.2,490.2 716.6,481.3 720.7,479.0" stroke="#34469a" stroke-width="1.4" fill="none"/></svg>
<div style="position:absolute;white-space:pre;color:#666;font-weight:400;-webkit-text-stroke:0.2px currentColor;left:502px;top:507.03px;font-size:7.46px;line-height:8.95px;">Sept 2023</div>
<div style="position:absolute;white-space:pre;color:#666;font-weight:400;-webkit-text-stroke:0.2px currentColor;right:879.8px;top:507.03px;font-size:7.46px;line-height:8.95px;">Sept 2024</div>
<div style="position:absolute;white-space:pre;color:#111;font-weight:700;left:746.25px;top:396.81px;font-size:19.98px;line-height:23.98px;">27.5k</div>
<div style="position:absolute;white-space:pre;color:#333;font-weight:700;left:746.25px;top:425.12px;font-size:6.97px;line-height:8.36px;">Total Active Users</div>
<svg style="position:absolute;left:0px;top:0px;" width="1600" height="1036" viewBox="0 0 1600 1036" fill="none"><defs><linearGradient id="g2" x1="0" x2="0" y1="0" y2="1"><stop offset="0" stop-color="#3f3a8f" stop-opacity="0.78"/><stop offset="1" stop-color="#3f3a8f" stop-opacity="0"/></linearGradient></defs><path d="M746.2,465.9 C750.6,465.2 765.0,462.3 772.2,461.9 C779.4,461.5 780.8,462.1 789.4,463.8 C798.0,465.4 814.9,471.2 823.8,471.6 C832.6,472.0 832.6,465.9 842.5,465.9 C852.4,465.9 872.7,472.4 883.1,471.6 C893.5,470.8 898.6,462.1 905.0,461.2 C911.4,460.4 913.2,467.0 921.2,466.6 C929.3,466.2 946.2,459.7 953.4,459.0 C960.6,458.3 962.6,461.7 964.4,462.2 L964.4,494 L746.25,494 Z" fill="url(#g2)" transform="translate(0,0)" style="transform-box:view-box"/><path d="M746.2,465.9 C750.6,465.2 765.0,462.3 772.2,461.9 C779.4,461.5 780.8,462.1 789.4,463.8 C798.0,465.4 814.9,471.2 823.8,471.6 C832.6,472.0 832.6,465.9 842.5,465.9 C852.4,465.9 872.7,472.4 883.1,471.6 C893.5,470.8 898.6,462.1 905.0,461.2 C911.4,460.4 913.2,467.0 921.2,466.6 C929.3,466.2 946.2,459.7 953.4,459.0 C960.6,458.3 962.6,461.7 964.4,462.2" stroke="#3c3890" stroke-width="1.3" fill="none"/></svg>
<div style="position:absolute;white-space:pre;color:#666;font-weight:400;-webkit-text-stroke:0.2px currentColor;left:746.25px;top:505.33px;font-size:7.46px;line-height:8.95px;">Sept 2023</div>
<div style="position:absolute;white-space:pre;color:#666;font-weight:400;-webkit-text-stroke:0.2px currentColor;right:635.6px;top:505.33px;font-size:7.46px;line-height:8.95px;">Sept 2024</div>
<div style="position:absolute;white-space:pre;color:#111;font-weight:700;left:990px;top:396.33px;font-size:20.78px;line-height:24.94px;">60%</div>
<div style="position:absolute;white-space:pre;color:#333;font-weight:700;left:990px;top:425.07px;font-size:7.05px;line-height:8.46px;">Total Retention Rate</div>
<svg style="position:absolute;left:0px;top:0px;" width="1600" height="1036" viewBox="0 0 1600 1036" fill="none"><path d="M990.0,465.3 C994.6,465.9 1009.5,466.9 1017.5,469.1 C1025.5,471.3 1029.7,476.3 1037.8,478.4 C1045.9,480.5 1057.8,480.3 1065.9,481.6 C1074.0,482.9 1079.2,484.3 1086.2,486.2 C1093.3,488.2 1099.2,492.3 1108.1,493.4 C1117.0,494.5 1128.5,492.4 1139.4,493.1 C1150.3,493.8 1162.3,496.2 1173.8,497.5 C1185.2,498.8 1202.4,500.1 1208.1,500.6" stroke="#34469a" stroke-width="1.4" fill="none"/></svg>
<div style="position:absolute;white-space:pre;color:#666;font-weight:400;-webkit-text-stroke:0.2px currentColor;left:990px;top:506.93px;font-size:7.46px;line-height:8.95px;">Sept 2023</div>
<div style="position:absolute;white-space:pre;color:#666;font-weight:400;-webkit-text-stroke:0.2px currentColor;right:391.79999999999995px;top:506.93px;font-size:7.46px;line-height:8.95px;">Sept 2024</div>
<div style="position:absolute;white-space:pre;color:#111;font-weight:700;left:502px;top:542.74px;font-size:20.09px;line-height:24.11px;">963k</div>
<div style="position:absolute;white-space:pre;color:#333;font-weight:700;left:502px;top:571.02px;font-size:6.96px;line-height:8.35px;">Current Month's Total Feature Usage</div>
<div style="position:absolute;left:502.2px;top:601.6px;width:61.5px;height:43.10000000000002px;background:#384a8e;border-radius:3px 3px 0 0"></div>
<div style="position:absolute;white-space:pre;color:#666;font-weight:400;-webkit-text-stroke:0.2px currentColor;left:502.2px;top:653.11px;font-size:7.15px;line-height:8.58px;">Message</div>
<div style="position:absolute;left:568.75px;top:601.6px;width:61.5px;height:43.10000000000002px;background:#4fa65a;border-radius:3px 3px 0 0"></div>
<div style="position:absolute;white-space:pre;color:#666;font-weight:400;-webkit-text-stroke:0.2px currentColor;left:568.75px;top:652.87px;font-size:7.55px;line-height:9.06px;">Audio Call</div>
<div style="position:absolute;left:635.6px;top:604.7px;width:61.5px;height:40.0px;background:#43a9de;border-radius:3px 3px 0 0"></div>
<div style="position:absolute;white-space:pre;color:#666;font-weight:400;-webkit-text-stroke:0.2px currentColor;left:635.6px;top:652.85px;font-size:7.58px;line-height:9.09px;">Video Call</div>
<div style="position:absolute;left:702.2px;top:611px;width:61.5px;height:33.700000000000045px;background:#ea3a35;border-radius:3px 3px 0 0"></div>
<div style="position:absolute;white-space:pre;color:#666;font-weight:400;-webkit-text-stroke:0.2px currentColor;left:702.2px;top:652.92px;font-size:7.47px;line-height:8.96px;">File Transfer</div>
<div style="position:absolute;left:769.4px;top:601.6px;width:61.5px;height:43.10000000000002px;background:#f2b646;border-radius:3px 3px 0 0"></div>
<div style="position:absolute;white-space:pre;color:#666;font-weight:400;-webkit-text-stroke:0.2px currentColor;left:769.4px;top:653.06px;font-size:7.23px;line-height:8.68px;">User Sign Up</div>
<div style="position:absolute;left:836px;top:617.5px;width:61.5px;height:27.200000000000045px;background:#d4bb1e;border-radius:3px 3px 0 0"></div>
<div style="position:absolute;white-space:pre;color:#666;font-weight:400;-webkit-text-stroke:0.2px currentColor;left:836px;top:652.95px;font-size:7.42px;line-height:8.9px;">Refferal Sign Up</div>
<div style="position:absolute;left:902.8px;top:598.75px;width:61.5px;height:45.950000000000045px;background:#664f91;border-radius:3px 3px 0 0"></div>
<div style="position:absolute;white-space:pre;color:#666;font-weight:400;-webkit-text-stroke:0.2px currentColor;left:902.8px;top:653.01px;font-size:7.31px;line-height:8.77px;">Group Chat</div>
<div style="position:absolute;white-space:pre;color:#111;font-weight:700;left:990.25px;top:542.66px;font-size:20.23px;line-height:24.28px;">30%</div>
<div style="position:absolute;white-space:pre;color:#333;font-weight:700;left:990.25px;top:570.98px;font-size:7.03px;line-height:8.44px;">Total User Growth Rate</div>
<svg style="position:absolute;left:0px;top:0px;" width="1600" height="1036" viewBox="0 0 1600 1036" fill="none"><path d="M990.2,642.6 C995.3,641.6 1009.9,637.9 1020.6,636.4 C1031.3,634.9 1040.3,634.8 1054.4,633.8 C1068.5,632.8 1088.1,631.8 1105.0,630.5 C1121.9,629.2 1142.4,627.8 1155.6,626.2 C1168.8,624.7 1175.5,623.6 1184.3,621.2 C1193.1,618.8 1204.3,613.5 1208.3,611.9" stroke="#3aa3e6" stroke-width="1.3" fill="none"/><path d="M990.2,650.2 C993.9,648.2 1004.9,642.0 1012.2,638.1 C1019.5,634.2 1028.5,629.1 1034.1,627.1 C1039.7,625.1 1039.7,626.0 1045.9,626.2 C1052.1,626.5 1061.4,628.4 1071.2,628.8 C1081.1,629.2 1093.8,628.1 1105.0,628.8 C1116.2,629.5 1128.9,631.9 1138.8,633.0 C1148.6,634.1 1156.4,635.7 1164.0,635.5 C1171.6,635.3 1177.0,633.2 1184.3,631.7 C1191.6,630.2 1204.0,627.2 1207.9,626.2" stroke="#3e9e4a" stroke-width="1.3" fill="none"/><path d="M990.2,646.2 C995.3,645.6 1009.9,644.1 1020.6,642.3 C1031.3,640.5 1042.6,636.1 1054.4,635.5 C1066.2,634.9 1077.4,639.1 1091.5,638.6 C1105.6,638.1 1126.7,634.0 1138.8,632.7 C1150.8,631.4 1155.8,631.0 1164.0,630.6 C1172.2,630.2 1180.4,632.4 1187.7,630.5 C1195.0,628.6 1204.5,620.9 1207.9,619.0" stroke="#34449a" stroke-width="1.4" fill="none"/></svg>
<div style="position:absolute;white-space:pre;color:#666;font-weight:400;-webkit-text-stroke:0.2px currentColor;left:990.25px;top:652.93px;font-size:7.46px;line-height:8.95px;">Sept 2023</div>
<div style="position:absolute;white-space:pre;color:#666;font-weight:400;-webkit-text-stroke:0.2px currentColor;right:391.70000000000005px;top:652.93px;font-size:7.46px;line-height:8.95px;">Sept 2024</div>
<div style="position:absolute;white-space:pre;color:#111;font-weight:700;left:502px;top:688.51px;font-size:20.48px;line-height:24.58px;">60%</div>
<div style="position:absolute;white-space:pre;color:#222;font-weight:700;left:502px;top:716.93px;font-size:6.78px;line-height:8.13px;">Current Month's Conversions</div>
<div style="position:absolute;white-space:pre;color:#555;font-weight:400;-webkit-text-stroke:0.2px currentColor;left:502px;top:733.05px;font-size:7.25px;line-height:8.69px;">Sign Ups</div>
<div style="position:absolute;left:574.1px;top:733.3000000000001px;width:202.5px;height:6.6px;background:#374a94;border-radius:4px"></div>
<div style="position:absolute;white-space:pre;color:#555;font-weight:400;-webkit-text-stroke:0.2px currentColor;left:782.6px;top:732.89px;font-size:7.51px;line-height:9.01px;">2,600</div>
<div style="position:absolute;white-space:pre;color:#555;font-weight:400;-webkit-text-stroke:0.2px currentColor;left:502px;top:749.32px;font-size:7.47px;line-height:8.97px;">Profile Completed</div>
<div style="position:absolute;left:574.1px;top:749.7px;width:343.6px;height:6.6px;background:#48a456;border-radius:4px"></div>
<div style="position:absolute;white-space:pre;color:#555;font-weight:400;-webkit-text-stroke:0.2px currentColor;left:923.7px;top:749.29px;font-size:7.51px;line-height:9.01px;">4,800</div>
<div style="position:absolute;white-space:pre;color:#555;font-weight:400;-webkit-text-stroke:0.2px currentColor;left:502px;top:765.80px;font-size:7.34px;line-height:8.8px;">First Message Sent</div>
<div style="position:absolute;left:574.1px;top:766.1px;width:379.69999999999993px;height:6.6px;background:#8ddcef;border-radius:4px"></div>
<div style="position:absolute;white-space:pre;color:#555;font-weight:400;-webkit-text-stroke:0.2px currentColor;left:959.8px;top:765.69px;font-size:7.51px;line-height:9.01px;">6,000</div>
<div style="position:absolute;white-space:pre;color:#555;font-weight:400;-webkit-text-stroke:0.2px currentColor;left:502px;top:782.14px;font-size:7.44px;line-height:8.92px;">First Call Made</div>
<div style="position:absolute;left:574.1px;top:782.5px;width:293.9px;height:6.6px;background:#e8393a;border-radius:4px"></div>
<div style="position:absolute;white-space:pre;color:#555;font-weight:400;-webkit-text-stroke:0.2px currentColor;left:874px;top:782.09px;font-size:7.51px;line-height:9.01px;">4,000</div>
<div style="position:absolute;white-space:pre;color:#555;font-weight:400;-webkit-text-stroke:0.2px currentColor;left:502px;top:798.56px;font-size:7.40px;line-height:8.88px;">Subscription made</div>
<div style="position:absolute;left:574.1px;top:798.9000000000001px;width:146.19999999999993px;height:6.6px;background:#f3b444;border-radius:4px"></div>
<div style="position:absolute;white-space:pre;color:#555;font-weight:400;-webkit-text-stroke:0.2px currentColor;left:726.3px;top:798.49px;font-size:7.51px;line-height:9.01px;">2,000</div>
<div style="position:absolute;white-space:pre;color:#111;font-weight:700;left:492px;top:824.12px;font-size:8.79px;line-height:10.55px;">Recent Users</div>
<div style="position:absolute;white-space:pre;color:#111;font-weight:700;left:736.1px;top:823.92px;font-size:9.13px;line-height:10.95px;">Recent Activity</div>
<div style="position:absolute;left:492px;top:840.3px;width:238.2px;height:200px;background:#fff;border-radius:4px;box-shadow:inset 0 0 0 1px #e6e6e6"></div>
<div style="position:absolute;left:736px;top:840.3px;width:238.6px;height:200px;background:#fff;border-radius:4px;box-shadow:inset 0 0 0 1px #e6e6e6"></div>
<svg style="position:absolute;left:501.8px;top:850.9px;" width="19.8" height="19.8" viewBox="0 0 20 20" fill="none"><defs><clipPath id="av860"><circle cx="10" cy="10" r="10"/></clipPath></defs><g clip-path="url(#av860)"><rect width="20" height="20" fill="#b9b6ae"/><rect x="0" y="0" width="4" height="20" fill="#4d6b4d"/><path d="M2 20c1-5 4-6 8-6s7 1 8 6z" fill="#c9ccd0"/><path d="M7 14l3 6 3-6v6H7z" fill="#2d3d66"/><ellipse cx="10" cy="8.8" rx="3.3" ry="4" fill="#d9a987"/><path d="M6.5 7.5c0-3 1.5-4 3.5-4s3.5 1 3.5 4c-1-1-2-1.5-3.5-1.5S7.5 6.5 6.5 7.5z" fill="#1e1a18"/></g></svg>
<div style="position:absolute;white-space:pre;color:#333;font-weight:700;left:528.1px;top:852.09px;font-size:7.85px;line-height:9.42px;">Ram Sharma</div>
<div style="position:absolute;white-space:pre;color:#777;font-weight:400;-webkit-text-stroke:0.2px currentColor;left:528.1px;top:865.09px;font-size:7.18px;line-height:8.62px;">Jan 2, 2024 - ram@gmail.com</div>
<svg style="position:absolute;left:501.8px;top:882.7px;" width="19.8" height="19.8" viewBox="0 0 20 20" fill="none"><defs><clipPath id="av892"><circle cx="10" cy="10" r="10"/></clipPath></defs><g clip-path="url(#av892)"><rect width="20" height="20" fill="#8fb0cf"/><rect y="9" width="20" height="11" fill="#6b7a45"/><path d="M2 20c1-5 4-6 8-6s7 1 8 6z" fill="#223350"/><ellipse cx="10" cy="8.8" rx="3.3" ry="4" fill="#c99877"/><path d="M6.5 7.5c0-3 1.5-4 3.5-4s3.5 1 3.5 4c-1-1-2-1.5-3.5-1.5S7.5 6.5 6.5 7.5z" fill="#3a2a20"/></g></svg>
<div style="position:absolute;white-space:pre;color:#333;font-weight:700;left:528.1px;top:884.12px;font-size:7.97px;line-height:9.56px;">Amit Chauhan</div>
<div style="position:absolute;white-space:pre;color:#777;font-weight:400;-webkit-text-stroke:0.2px currentColor;left:528.1px;top:897.14px;font-size:7.26px;line-height:8.71px;">Jan 2, 2024 - Amit@gmail.com</div>
<svg style="position:absolute;left:501.8px;top:914.4px;" width="19.8" height="19.8" viewBox="0 0 20 20" fill="none"><defs><clipPath id="av924"><circle cx="10" cy="10" r="10"/></clipPath></defs><g clip-path="url(#av924)"><rect width="20" height="20" fill="#2e2a26"/><rect x="3" y="6" width="14" height="4" fill="#c9c2b0"/><path d="M2 20c1-5 4-6 8-6s7 1 8 6z" fill="#bcd3ea"/><ellipse cx="10" cy="8.8" rx="3.3" ry="4" fill="#e9c6aa"/><path d="M6.5 7.5c0-3 1.5-4 3.5-4s3.5 1 3.5 4c-1-1-2-1.5-3.5-1.5S7.5 6.5 6.5 7.5z" fill="#d8b98a"/></g></svg>
<div style="position:absolute;white-space:pre;color:#333;font-weight:700;left:528.1px;top:916.07px;font-size:7.88px;line-height:9.45px;">Gopal Rao</div>
<div style="position:absolute;white-space:pre;color:#777;font-weight:400;-webkit-text-stroke:0.2px currentColor;left:528.1px;top:929.13px;font-size:7.12px;line-height:8.54px;">Jan 2, 2024 - gopa@gmail.com</div>
<svg style="position:absolute;left:501.8px;top:946.3000000000001px;" width="19.8" height="19.8" viewBox="0 0 20 20" fill="none"><defs><clipPath id="av956"><circle cx="10" cy="10" r="10"/></clipPath></defs><g clip-path="url(#av956)"><rect width="20" height="20" fill="#c56f1c"/><path d="M2 20c1-5 4-6 8-6s7 1 8 6z" fill="#3a3a3a"/><ellipse cx="10" cy="8.8" rx="3.3" ry="4" fill="#d8a98a"/><path d="M6.5 7.5c0-3 1.5-4 3.5-4s3.5 1 3.5 4c-1-1-2-1.5-3.5-1.5S7.5 6.5 6.5 7.5z" fill="#2a1c16"/></g></svg>
<div style="position:absolute;white-space:pre;color:#333;font-weight:700;left:528.1px;top:947.75px;font-size:8.08px;line-height:9.69px;">Mithun Murari</div>
<svg style="position:absolute;left:745.5px;top:851.3px;" width="10" height="10" viewBox="0 0 10 10" fill="none"><rect x="0.8" y="4.8" width="6.4" height="4.6" rx="1" stroke="#444" stroke-width="1"/><path d="M5 4.8V2.8a2 2 0 014 0v1" stroke="#444" stroke-width="1"/></svg>
<div style="position:absolute;white-space:pre;color:#333;font-weight:400;-webkit-text-stroke:0.2px currentColor;left:760.1px;top:851.83px;font-size:8.78px;line-height:10.54px;">log in</div>
<div style="position:absolute;white-space:pre;color:#888;font-weight:400;-webkit-text-stroke:0.2px currentColor;right:635.8px;top:852.78px;font-size:7.19px;line-height:8.63px;">Jan 04, 2024</div>
<svg style="position:absolute;left:745.5px;top:872px;" width="10" height="10" viewBox="0 0 10 10" fill="none"><path d="M3.2 5V1.6a0.9 0.9 0 011.8 0V5l3 0.6a1.2 1.2 0 011 1.3L8.6 9.5H3.6L1.6 7.3a0.9 0.9 0 011.3-1.2z" stroke="#444" stroke-width="0.95"/></svg>
<div style="position:absolute;white-space:pre;color:#333;font-weight:400;-webkit-text-stroke:0.2px currentColor;left:760.1px;top:872.87px;font-size:8.22px;line-height:9.87px;">app open</div>
<div style="position:absolute;white-space:pre;color:#888;font-weight:400;-webkit-text-stroke:0.2px currentColor;right:635.8px;top:873.48px;font-size:7.19px;line-height:8.63px;">Jan 04, 2024</div>
<svg style="position:absolute;left:745.5px;top:892.9px;" width="10" height="10" viewBox="0 0 10 10" fill="none"><circle cx="3.8" cy="3" r="2" stroke="#444" stroke-width="1"/><path d="M0.6 9.5a3.2 3.2 0 016.4 0z" stroke="#444" stroke-width="1"/><path d="M8.2 3.5v3M6.7 5h3" stroke="#444" stroke-width="1"/></svg>
<div style="position:absolute;white-space:pre;color:#333;font-weight:400;-webkit-text-stroke:0.2px currentColor;left:760.1px;top:893.49px;font-size:8.68px;line-height:10.42px;">app install</div>
<div style="position:absolute;white-space:pre;color:#888;font-weight:400;-webkit-text-stroke:0.2px currentColor;right:635.8px;top:894.38px;font-size:7.19px;line-height:8.63px;">Jan 04, 2024</div>
<svg style="position:absolute;left:745.5px;top:913.8px;" width="10" height="10" viewBox="0 0 10 10" fill="none"><circle cx="3.8" cy="3" r="2" stroke="#444" stroke-width="1"/><path d="M0.6 9.5a3.2 3.2 0 016.4 0z" stroke="#444" stroke-width="1"/><path d="M8.2 3.5v3M6.7 5h3" stroke="#444" stroke-width="1"/></svg>
<div style="position:absolute;white-space:pre;color:#333;font-weight:400;-webkit-text-stroke:0.2px currentColor;left:760.1px;top:914.39px;font-size:8.68px;line-height:10.42px;">app install</div>
<div style="position:absolute;white-space:pre;color:#888;font-weight:400;-webkit-text-stroke:0.2px currentColor;right:635.8px;top:915.28px;font-size:7.19px;line-height:8.63px;">Jan 04, 2024</div>
<svg style="position:absolute;left:745.5px;top:934.7px;" width="10" height="10" viewBox="0 0 10 10" fill="none"><circle cx="3.8" cy="3" r="2" stroke="#444" stroke-width="1"/><path d="M0.6 9.5a3.2 3.2 0 016.4 0z" stroke="#444" stroke-width="1"/><path d="M8.2 3.5v3M6.7 5h3" stroke="#444" stroke-width="1"/></svg>
<div style="position:absolute;white-space:pre;color:#333;font-weight:400;-webkit-text-stroke:0.2px currentColor;left:760.1px;top:935.29px;font-size:8.68px;line-height:10.42px;">app install</div>
<div style="position:absolute;white-space:pre;color:#888;font-weight:400;-webkit-text-stroke:0.2px currentColor;right:635.8px;top:936.18px;font-size:7.19px;line-height:8.63px;">Jan 04, 2024</div>
<svg style="position:absolute;left:745.5px;top:954.6px;" width="10" height="10" viewBox="0 0 10 10" fill="none"><circle cx="3.8" cy="3" r="2" stroke="#444" stroke-width="1"/><path d="M0.6 9.5a3.2 3.2 0 016.4 0z" stroke="#444" stroke-width="1"/><path d="M8.2 3.5v3M6.7 5h3" stroke="#444" stroke-width="1"/></svg>
<div style="position:absolute;white-space:pre;color:#333;font-weight:400;-webkit-text-stroke:0.2px currentColor;left:760.1px;top:955.19px;font-size:8.68px;line-height:10.42px;">app install</div>
<div style="position:absolute;white-space:pre;color:#888;font-weight:400;-webkit-text-stroke:0.2px currentColor;right:635.8px;top:956.08px;font-size:7.19px;line-height:8.63px;">Jan 04, 2024</div>
</div></div>
<div style="position:absolute;left:245px;top:912px;width:1000px;height:48.5px;background:linear-gradient(180deg,rgba(0,0,0,0) 0%,rgba(0,0,0,0.025) 45%,rgba(0,0,0,0.1) 100%);"></div>
<div style="position:absolute;left:245.5px;top:958.8px;width:394px;height:1.5px;background:#1a78d0;border-radius:1px"></div>
<svg style="position:absolute;left:824px;top:424px;filter:drop-shadow(1px 2px 1.5px rgba(0,0,0,0.45))" width="30" height="32" viewBox="0 0 30 32" fill="none"><path d="M3 3l22 9.5-9.5 3.2L11 27z" fill="#000" stroke="#fff" stroke-width="2" stroke-linejoin="round"/></svg>
<div style="position:absolute;left:603.5px;top:905.3px;width:393.2px;height:44.6px;background:#2c2c2c;border-radius:13px;box-shadow:0 2px 8px rgba(0,0,0,0.35), 0 0 0 0.5px rgba(0,0,0,0.4)"></div>
<div style="position:absolute;left:610.6px;top:912.5px;width:29.6px;height:29.9px;background:#0d8ce9;border-radius:6px"></div>
<svg style="position:absolute;left:617px;top:918.5px;" width="17" height="17" viewBox="0 0 17 17" fill="none"><path d="M2 2l13 5-5.5 2L7 15z" stroke="#fff" stroke-width="1.4" stroke-linejoin="round"/></svg>
<svg style="position:absolute;left:644.3px;top:924.8px;" width="8" height="6" viewBox="0 0 8 6" fill="none"><path d="M1 1.5l3 3 3-3" stroke="#cfcfcf" stroke-width="1.2"/></svg>
<svg style="position:absolute;left:698px;top:924.8px;" width="8" height="6" viewBox="0 0 8 6" fill="none"><path d="M1 1.5l3 3 3-3" stroke="#cfcfcf" stroke-width="1.2"/></svg>
<svg style="position:absolute;left:751.3px;top:924.8px;" width="8" height="6" viewBox="0 0 8 6" fill="none"><path d="M1 1.5l3 3 3-3" stroke="#cfcfcf" stroke-width="1.2"/></svg>
<svg style="position:absolute;left:804.9px;top:924.8px;" width="8" height="6" viewBox="0 0 8 6" fill="none"><path d="M1 1.5l3 3 3-3" stroke="#cfcfcf" stroke-width="1.2"/></svg>
<svg style="position:absolute;left:670.5px;top:919.5px;" width="17" height="17" viewBox="0 0 17 17" fill="none"><path d="M5 1v15M12 1v15M1 5h15M1 12h15" stroke="#e8e8e8" stroke-width="1.4"/></svg>
<svg style="position:absolute;left:723.5px;top:919.5px;" width="17" height="17" viewBox="0 0 17 17" fill="none"><rect x="1.5" y="1.5" width="14" height="14" rx="1.5" stroke="#e8e8e8" stroke-width="1.4"/></svg>
<svg style="position:absolute;left:777px;top:919px;" width="17" height="18" viewBox="0 0 17 18" fill="none"><path d="M2 2.5l7.5-1.5 6 8-3.5 6.5-8-3.5z" stroke="#e8e8e8" stroke-width="1.4" stroke-linejoin="round"/><circle cx="8" cy="8.5" r="1.5" fill="#e8e8e8"/><path d="M2 2.5l5 5" stroke="#e8e8e8" stroke-width="1.1"/></svg>
<svg style="position:absolute;left:830px;top:919.5px;" width="17" height="17" viewBox="0 0 17 17" fill="none"><path d="M2 3.5V1.5h13v2M8.5 1.5v14M5.5 15.5h6" stroke="#e8e8e8" stroke-width="1.4"/></svg>
<svg style="position:absolute;left:867px;top:919.5px;" width="18" height="17" viewBox="0 0 18 17" fill="none"><path d="M9 1.5a7 7 0 017 7 7 7 0 01-7 7H2V8.5a7 7 0 017-7z" stroke="#e8e8e8" stroke-width="1.4"/></svg>
<svg style="position:absolute;left:904.5px;top:919px;" width="18" height="18" viewBox="0 0 18 18" fill="none"><path d="M5 1.5l3.5 3.5L5 8.5 1.5 5z" stroke="#e8e8e8" stroke-width="1.3"/><circle cx="13" cy="5" r="3.2" stroke="#e8e8e8" stroke-width="1.3"/><rect x="2" y="10.5" width="6" height="6" rx="1" stroke="#e8e8e8" stroke-width="1.3"/><path d="M13 10v7M9.5 13.5h7" stroke="#e8e8e8" stroke-width="1.3"/></svg>
<div style="position:absolute;left:936.3px;top:905.3px;width:1px;height:44.6px;background:#3e3e3e;"></div>
<div style="position:absolute;left:948px;top:916.4px;width:37.4px;height:22.1px;background:#383838;border-radius:7px"></div>
<div style="position:absolute;left:948.5px;top:916.9px;width:22px;height:21.1px;background:#242424;border-radius:6.5px"></div>
<svg style="position:absolute;left:952px;top:922px;" width="15" height="11" viewBox="0 0 15 11" fill="none"><path d="M4 1.5L1 5.5l3 4M11 1.5l3 4-3 4M8.7 1L6.3 10" stroke="#e8e8e8" stroke-width="1.2"/></svg>
<div style="position:absolute;left:152.4px;top:962.6px;width:1295.6px;height:68.6px;background:rgba(62,91,10,0.92);border-radius:17px;box-shadow:inset 0 0 0 1px rgba(150,180,110,0.35)"></div>
<div style="position:absolute;left:161.6px;top:972px;width:44.5px;height:44.5px;border-radius:10px;overflow:hidden"><div style="position:absolute;inset:0;background:linear-gradient(90deg,#1e9bf5 0 52%,#e8ecf2 52%)"><svg width="44.5" height="44.5" viewBox="0 0 44 44" style="position:absolute;left:0;top:0" fill="none"><path d="M23 0C19 9 17 18 19 26h5c-1 6 0 12 1 18H44V0z" fill="#e4e8ee"/><path d="M23 0C19 9 17 18 19 26h5c-1 6 0 12 1 18H0V0z" fill="url(#fg)"/><defs><linearGradient id="fg" x1="0" y1="0" x2="0" y2="1"><stop offset="0" stop-color="#1fc2f9"/><stop offset="1" stop-color="#1565e0"/></linearGradient></defs><path d="M8 30c7 6 21 6 28 0" stroke="#1a1a1a" stroke-width="1.6"/><path d="M11 13v4M31 13v4" stroke="#1a1a1a" stroke-width="1.8"/></svg></div></div>
<div style="position:absolute;left:220.6px;top:972px;width:44.5px;height:44.5px;border-radius:10px;overflow:hidden"><div style="position:absolute;inset:0;background:#c5cab8"><svg width="44.5" height="44.5" viewBox="0 0 44 44" style="position:absolute;left:0;top:0" fill="none"><rect x="7" y="7" width="8.5" height="8.5" rx="2.2" fill="#35c94a"/><rect x="18" y="7" width="8.5" height="8.5" rx="2.2" fill="#f8b820"/><rect x="29" y="7" width="8.5" height="8.5" rx="2.2" fill="#f57d1f"/><rect x="7" y="18" width="8.5" height="8.5" rx="2.2" fill="#e02a2a"/><rect x="18" y="18" width="8.5" height="8.5" rx="2.2" fill="#a7b0b4"/><rect x="29" y="18" width="8.5" height="8.5" rx="2.2" fill="#ef4169"/><rect x="7" y="29" width="8.5" height="8.5" rx="2.2" fill="#9b4ee0"/><rect x="18" y="29" width="8.5" height="8.5" rx="2.2" fill="#1ea0f5"/><rect x="29" y="29" width="8.5" height="8.5" rx="2.2" fill="#2fcfa0"/></svg></div></div>
<div style="position:absolute;left:279.6px;top:972px;width:44.5px;height:44.5px;border-radius:10px;overflow:hidden"><div style="position:absolute;inset:0;background:linear-gradient(180deg,#fed84a 0,#fbc712 24%,#f4f2ec 24%,#ecebe6 100%)"><svg width="44.5" height="44.5" viewBox="0 0 44 44" style="position:absolute;left:0;top:0" fill="none"><path d="M0 11.5h44" stroke="#d0cfc8" stroke-width="0.8" stroke-dasharray="1 1"/><path d="M0 22.5h44M0 33h44" stroke="#d4d2cb" stroke-width="0.8"/></svg></div></div>
<div style="position:absolute;left:338.6px;top:972px;width:44.5px;height:44.5px;border-radius:10px;overflow:hidden"><div style="position:absolute;inset:0;background:linear-gradient(180deg,#fdaa35,#f38a15)"><svg width="44.5" height="44.5" viewBox="0 0 44 44" style="position:absolute;left:0;top:0" fill="none"><path d="M35 8L11 35" stroke="#f4f4f4" stroke-width="3.6" stroke-linecap="round"/><path d="M27 17l-2 2" stroke="#bbb" stroke-width="1.5"/><path d="M10 38h26" stroke="#fde2b5" stroke-width="1"/></svg></div></div>
<div style="position:absolute;left:397.4px;top:972px;width:44.5px;height:44.5px;border-radius:10px;overflow:hidden"><div style="position:absolute;inset:0;background:linear-gradient(180deg,#1fb6fa,#1468e6)"><svg width="44.5" height="44.5" viewBox="0 0 44 44" style="position:absolute;left:0;top:0" fill="none"><g stroke="#fff" stroke-width="3.2" stroke-linecap="round"><path d="M18 9l12 22M26 9L14 31M9 27h26"/></g></svg></div></div>
<div style="position:absolute;left:457px;top:972px;width:44.5px;height:44.5px;border-radius:10px;overflow:hidden"><div style="position:absolute;inset:0;background:#b8b8b8"><div style="position:absolute;left:2px;top:2px;right:2px;bottom:2px;border-radius:9px;background:#111"></div><svg width="44.5" height="44.5" viewBox="0 0 44 44" style="position:absolute;left:0;top:0" fill="none"><rect x="6" y="6" width="32" height="32" fill="#0f2a25"/><g stroke="#2b5a50" stroke-width="0.6"><path d="M6 14h32M6 22h32M6 30h32M14 6v32M22 6v32M30 6v32"/></g><path d="M6 24h6l2-12 2 20 3-10 3 4 3-5 4 5 3-2h6" stroke="#3fd9b0" stroke-width="1.2"/></svg></div></div>
<div style="position:absolute;left:515.6px;top:972px;width:44.5px;height:44.5px;border-radius:10px;overflow:hidden"><div style="position:absolute;inset:0;background:linear-gradient(180deg,#e6e6e6,#9c9c9c)"><svg width="44.5" height="44.5" viewBox="0 0 44 44" style="position:absolute;left:0;top:0" fill="none"><circle cx="22" cy="22" r="17" fill="#5e5e5e"/><circle cx="22" cy="22" r="14" fill="#bdbdbd" stroke="#6d6d6d" stroke-width="3" stroke-dasharray="2 1.2"/><circle cx="22" cy="22" r="10" fill="#8a8a8a"/><circle cx="22" cy="22" r="7.5" fill="#c9c9c9"/><path d="M22 22V13M22 22l-8 5M22 22l8 5" stroke="#6a6a6a" stroke-width="2.5"/></svg></div></div>
<div style="position:absolute;left:574.4px;top:972px;width:44.5px;height:44.5px;border-radius:10px;overflow:hidden"><div style="position:absolute;inset:0;background:linear-gradient(180deg,#0b6cf5,#0a5ae6)"><svg width="44.5" height="44.5" viewBox="0 0 44 44" style="position:absolute;left:0;top:0" fill="none"><text x="22" y="26" text-anchor="middle" font-family="Liberation Sans" font-weight="700" font-size="11.5" fill="#fff">zoom</text></svg></div></div>
<div style="position:absolute;left:633.4px;top:972px;width:44.5px;height:44.5px;border-radius:10px;overflow:hidden"><div style="position:absolute;inset:0;background:#2a1446"><svg width="44.5" height="44.5" viewBox="0 0 44 44" style="position:absolute;left:0;top:0" fill="none"><circle cx="22" cy="22" r="17" fill="#7d3bd6"/><path d="M22 5a17 17 0 010 34z" fill="#9d4fe0"/><circle cx="22" cy="22" r="11" stroke="#e2b9ff" stroke-width="2.2"/><circle cx="22" cy="22" r="6" stroke="#e2b9ff" stroke-width="2"/><path d="M22 5a17 17 0 000 34z" fill="#a355ef"/></svg></div></div>
<div style="position:absolute;left:692.4px;top:972px;width:44.5px;height:44.5px;border-radius:10px;overflow:hidden"><div style="position:absolute;inset:0;background:#f2f2f2"><svg width="44.5" height="44.5" viewBox="0 0 44 44" style="position:absolute;left:0;top:0" fill="none"><circle cx="22" cy="22" r="18" fill="#1d8ff0"/><circle cx="22" cy="22" r="15.5" stroke="#7cc5f8" stroke-width="1.5" stroke-dasharray="0.6 2"/><path d="M33 11L20 20l4 4z" fill="#f24236"/><path d="M11 33l9-13 4 4z" fill="#f0f0f0"/></svg></div></div>
<div style="position:absolute;left:751px;top:972px;width:44.5px;height:44.5px;border-radius:10px;overflow:hidden"><div style="position:absolute;inset:0;background:#ffffff"><svg width="44.5" height="44.5" viewBox="0 0 44 44" style="position:absolute;left:0;top:0" fill="none"><defs><linearGradient id="eg" x1="0" y1="1" x2="1" y2="0"><stop offset="0" stop-color="#0c59a4"/><stop offset="0.5" stop-color="#1b9de2"/><stop offset="1" stop-color="#53d27a"/></linearGradient></defs><path d="M7 24C7 14 14 7 23 7c9 0 15 6 15 12 0 5-4 7-8 7-3 0-6-1-6-3 0-1 1-2 1-3 0-4-4-6-8-6-6 0-10 6-10 10z" fill="url(#eg)"/><path d="M7 24c0 8 7 14 15 14 5 0 9-2 11-5-3 1-8 1-11-2-3-2-5-5-4-9-4 0-9 0-11 2z" fill="#1270c4"/></svg></div></div>
<div style="position:absolute;left:810px;top:972px;width:44.5px;height:44.5px;border-radius:10px;overflow:hidden"><div style="position:absolute;inset:0;background:#ffffff"><svg width="44.5" height="44.5" viewBox="0 0 44 44" style="position:absolute;left:0;top:0" fill="none"><path d="M30 6l8 4v24l-8 4-16-14-6 5-3-2V17l3-2 6 5z" fill="#1f8ad2"/><path d="M30 14v16l-10-8z" fill="#fff"/><path d="M30 6l8 4v24l-8 4z" fill="#2aa3f0"/></svg></div></div>
<div style="position:absolute;left:869.4px;top:972px;width:44.5px;height:44.5px;border-radius:10px;overflow:hidden"><div style="position:absolute;inset:0;background:#c9ced3"><div style="position:absolute;left:1.5px;top:1.5px;right:1.5px;bottom:1.5px;border-radius:9px;background:#000"></div><div style="position:absolute;left:4px;top:4px;right:4px;bottom:4px;border-radius:7px;background:#1e1e1e"></div><svg width="44.5" height="44.5" viewBox="0 0 44 44" style="position:absolute;left:0;top:0" fill="none"><path d="M8 9l5 3-5 3M15 17h6" stroke="#fff" stroke-width="1.5"/></svg></div></div>
<div style="position:absolute;left:928px;top:972px;width:44.5px;height:44.5px;border-radius:10px;overflow:hidden"><div style="position:absolute;inset:0;background:#f1f1f1"><svg width="44.5" height="44.5" viewBox="0 0 44 44" style="position:absolute;left:0;top:0" fill="none"><path d="M22,22 L22,40 A18,18 0 0 1 6.41,13 Z" fill="#34a853"/><path d="M22,22 L6.41,13 A18,18 0 0 1 37.59,13 Z" fill="#ea4335"/><path d="M22,22 L37.59,13 A18,18 0 0 1 22,40 Z" fill="#fbbc05"/><circle cx="22" cy="22" r="8.2" fill="#fff"/><circle cx="22" cy="22" r="6.4" fill="#4285f4"/></svg></div></div>
<div style="position:absolute;left:987px;top:972px;width:44.5px;height:44.5px;border-radius:10px;overflow:hidden"><div style="position:absolute;inset:0;background:linear-gradient(180deg,#5ff777,#1fbe3c)"><svg width="44.5" height="44.5" viewBox="0 0 44 44" style="position:absolute;left:0;top:0" fill="none"><path d="M22 8a14 14 0 00-12 21l-2 7 7-2A14 14 0 1022 8z" stroke="#fff" stroke-width="2.8"/><path d="M17 15c-1 1-2 3 0 6s5 6 8 7 4-1 4-2l-3-2-2 1c-2-1-4-3-5-5l1-2-1-3z" fill="#fff"/></svg></div></div>
<div style="position:absolute;left:1014px;top:965.6px;width:24px;height:24px;background:#ee3b34;border-radius:12px"></div>
<div style="position:absolute;white-space:pre;color:#fff;font-weight:400;-webkit-text-stroke:0.2px currentColor;left:1026px;transform:translateX(-50%);top:971.93px;font-size:10.79px;line-height:12.95px;">188</div>
<div style="position:absolute;left:1052px;top:972px;width:1px;height:50px;background:rgba(180,200,150,0.45);"></div>
<div style="position:absolute;left:1255.5px;top:972px;width:1px;height:50px;background:rgba(180,200,150,0.45);"></div>
<div style="position:absolute;left:1072.8px;top:972px;width:44.5px;height:44.5px;border-radius:10px;overflow:hidden"><div style="position:absolute;inset:0;background:#1e1e1e"><svg width="44.5" height="44.5" viewBox="0 0 44 44" style="position:absolute;left:0;top:0" fill="none"><path d="M15 6h7v10h-7a5 5 0 010-10z" fill="#f24e1e"/><path d="M22 6h7a5 5 0 010 10h-7z" fill="#ff7262"/><path d="M15 16h7v10h-7a5 5 0 010-10z" fill="#a259ff"/><circle cx="27" cy="21" r="5" fill="#1abcfe"/><path d="M15 26h7v5a5 5 0 11-7-5z" fill="#0acf83"/></svg></div></div>
<div style="position:absolute;left:1131.9px;top:972px;width:44.5px;height:44.5px;border-radius:10px;overflow:hidden"><div style="position:absolute;inset:0;background:linear-gradient(180deg,#dfe9ee,#9fa3a5)"><svg width="44.5" height="44.5" viewBox="0 0 44 44" style="position:absolute;left:0;top:0" fill="none"><path d="M40 10v26" stroke="#e8e8e8" stroke-width="2.5" stroke-dasharray="3 1.5"/><text x="10" y="20.5" font-family="Liberation Serif" font-size="14" fill="#333">A</text><text x="23" y="20.5" font-family="Liberation Serif" font-weight="700" font-size="14" fill="#333">A</text><text x="10" y="35" font-family="Liberation Serif" font-weight="700" font-size="14" fill="#333">A</text><text x="24" y="35" font-family="Liberation Serif" font-style="italic" font-size="16" fill="#333">a</text></svg></div></div>
<div style="position:absolute;left:1191px;top:972px;width:44.5px;height:44.5px;border-radius:10px;overflow:hidden"><div style="position:absolute;inset:0;background:#4f2c86"><svg width="44.5" height="44.5" viewBox="0 0 44 44" style="position:absolute;left:0;top:0" fill="none"><path d="M17 4H35a5 5 0 015 5V35a5 5 0 01-5 5H9a5 5 0 01-5-5V26z" fill="#e676f5"/><g stroke="#4f2c86" stroke-width="1.6" fill="none"><path d="M19 4l8.5 10M36 6L24 26M40 26H18M27 40l-9-13M8 37l9-15M4 25l9-10M13 15h14"/></g></svg></div></div>
<svg style="position:absolute;left:1274px;top:970px;" width="48" height="48" viewBox="0 0 48 48" fill="none"><rect x="3.5" y="1.8" width="38" height="14" rx="1" fill="#f6f1ee"/><rect x="5" y="2.5" width="34" height="2" fill="#e9b4b0"/><rect x="3" y="4.5" width="39" height="12" rx="1" fill="#f9f4ee"/><path d="M18 12c3-2 8-2 12 0l3 4H15z" fill="#e8764e"/><path d="M33 11l4 3-3 2z" fill="#3aa0d0"/><path d="M1 10.5a2.5 2.5 0 012.5-2.5h12l3 2.5H44a3 3 0 013 3V43a3 3 0 01-3 3H4a3 3 0 01-3-3z" fill="#2b9fe0"/><path d="M1 15.5a3 3 0 013-3h40a3 3 0 013 3V43a3 3 0 01-3 3H4a3 3 0 01-3-3z" fill="#5ecbfb"/></svg>
<svg style="position:absolute;left:1333px;top:972px;" width="48" height="46" viewBox="0 0 48 46" fill="none"><rect x="7" y="2" width="34" height="6" fill="#fff"/><rect x="7.8" y="3" width="32.4" height="2" fill="#4a3a48"/><rect x="5" y="5.5" width="38" height="6" fill="#fff"/><rect x="5.8" y="6.8" width="36.4" height="1.6" fill="#6b6e5a"/><rect x="1" y="9" width="46" height="30" fill="#fff"/><rect x="2.2" y="10.2" width="43.6" height="27.6" fill="#f6f6f6"/><path d="M4 13h8M4 15.5h8M4 18h8M4 20.5h6M4 23h7" stroke="#bbb" stroke-width="0.7"/><rect x="16" y="15" width="4" height="2.5" fill="#222"/><rect x="16" y="20" width="4" height="2" fill="#222"/><rect x="27" y="13.5" width="4" height="3" fill="#222"/><rect x="27" y="18" width="4" height="3" fill="#222"/><rect x="27" y="22.5" width="4" height="3" fill="#222"/><path d="M39 13h4M39 16h4M39 19h4M39 22h4" stroke="#ccc" stroke-width="0.7"/><rect x="2.2" y="35.5" width="43.6" height="2" fill="#6b7f55"/><rect x="13" y="32" width="2" height="1.2" fill="#a56bf0"/><rect x="17" y="32" width="3" height="1.2" fill="#f0806b"/></svg>
<svg style="position:absolute;left:1395px;top:967px;" width="43" height="52" viewBox="0 0 43 52" fill="none"><defs><linearGradient id="tg" x1="0" x2="1"><stop offset="0" stop-color="#6d7175"/><stop offset="0.45" stop-color="#a2a6a9"/><stop offset="1" stop-color="#63676a"/></linearGradient><linearGradient id="tg2" x1="0" x2="0" y1="0" y2="1"><stop offset="0" stop-color="#fff" stop-opacity="0.15"/><stop offset="1" stop-color="#000" stop-opacity="0.15"/></linearGradient></defs><path d="M2.5 9h38l-4.2 39a3 3 0 01-3 2.5H9.7a3 3 0 01-3-2.5z" fill="url(#tg)"/><path d="M2.5 9h38l-4.2 39a3 3 0 01-3 2.5H9.7a3 3 0 01-3-2.5z" fill="url(#tg2)"/><ellipse cx="21.5" cy="9.5" rx="19" ry="3.2" fill="#55595c"/><path d="M5 9l4-5 5 2 4-4 5 3 4-2 4 3 5-1 3 4-2 3H7z" fill="#eceef0"/><path d="M12 8l3-3 3 3zM24 7l3-3 2 4z" fill="#3b73c8"/><path d="M17 9l2-3 2 3z" fill="#49c6e0"/><path d="M28 9l3-4 2 3z" fill="#d3522f"/><path d="M20 8.5l1.5-3 1 3z" fill="#4faa4a"/></svg>
<div style="position:absolute;left:181.4px;top:1025.8px;width:3.2px;height:3.2px;background:#c8d8a8;border-radius:50%"></div>
<div style="position:absolute;left:299.4px;top:1025.8px;width:3.2px;height:3.2px;background:#c8d8a8;border-radius:50%"></div>
<div style="position:absolute;left:358.4px;top:1025.8px;width:3.2px;height:3.2px;background:#c8d8a8;border-radius:50%"></div>
<div style="position:absolute;left:889.4px;top:1025.8px;width:3.2px;height:3.2px;background:#c8d8a8;border-radius:50%"></div>
<div style="position:absolute;left:948.0px;top:1025.8px;width:3.2px;height:3.2px;background:#c8d8a8;border-radius:50%"></div>
<div style="position:absolute;left:1006.8px;top:1025.8px;width:3.2px;height:3.2px;background:#c8d8a8;border-radius:50%"></div>
<div style="position:absolute;left:1093.0px;top:1025.8px;width:3.2px;height:3.2px;background:#c8d8a8;border-radius:50%"></div>
<div style="position:absolute;left:1151.8000000000002px;top:1025.8px;width:3.2px;height:3.2px;background:#c8d8a8;border-radius:50%"></div>
<div style="position:absolute;left:1210.8000000000002px;top:1025.8px;width:3.2px;height:3.2px;background:#c8d8a8;border-radius:50%"></div>
<div style="position:absolute;left:0px;top:46px;width:1px;height:905px;background:#5b5c58;"></div>
<div style="position:absolute;left:1599px;top:46px;width:1px;height:905px;background:#5b5c58;"></div>
</body></html>
